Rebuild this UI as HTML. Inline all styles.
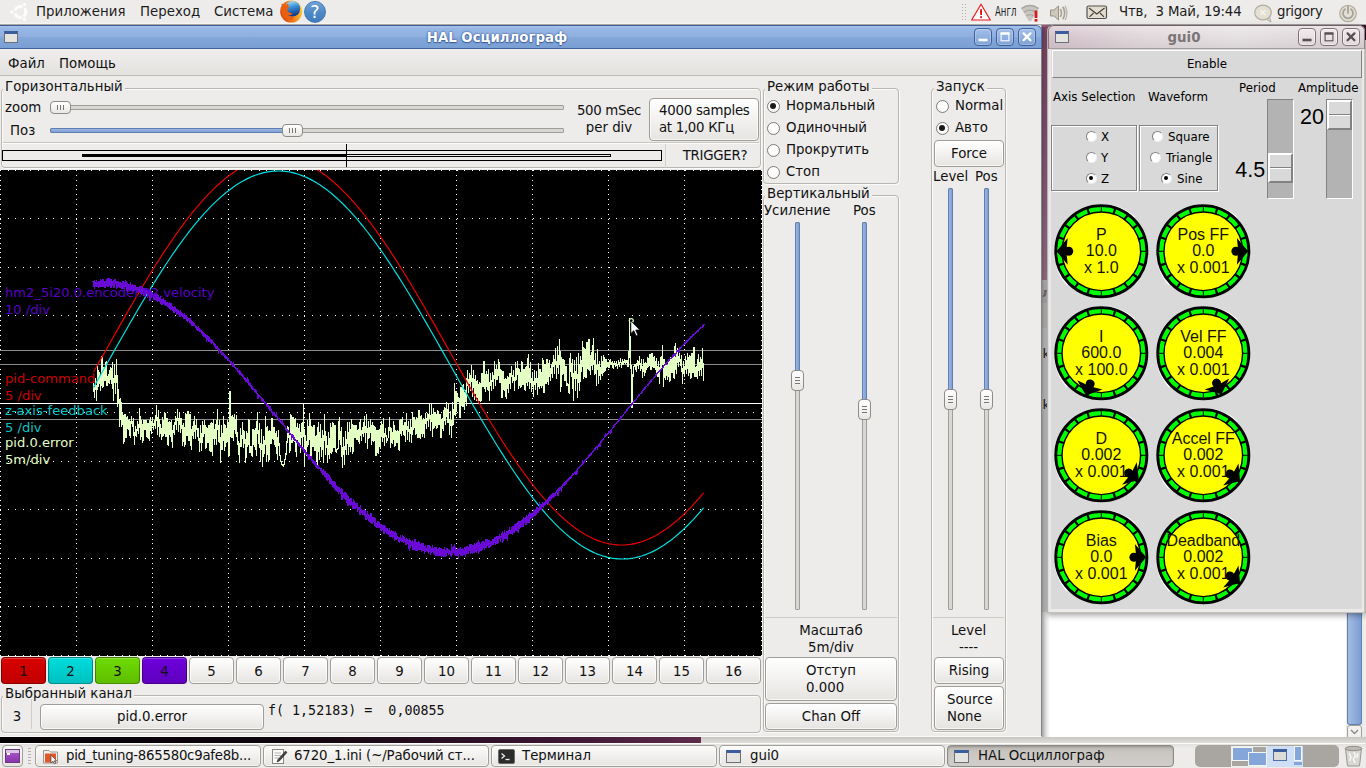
<!DOCTYPE html>
<html lang="ru"><head><meta charset="utf-8"><title>HAL Осциллограф</title>
<style>
*{box-sizing:border-box;margin:0;padding:0}
html,body{width:1366px;height:768px;overflow:hidden}
body{position:relative;background:#2c0d22;font-family:"DejaVu Sans","Liberation Sans",sans-serif;font-size:13.33px;color:#111;line-height:16px}
.a{position:absolute;white-space:nowrap}
.c{text-align:center}
.btn{position:absolute;border:1px solid #a09d98;border-radius:4px;background:linear-gradient(#ffffff,#f4f3f2 45%,#e6e4e1);box-shadow:inset 0 0 0 1px rgba(255,255,255,.7);text-align:center;white-space:nowrap}
.fr{position:absolute;border:1px solid #b9b6b1;border-radius:4px;box-shadow:inset 1px 1px 0 #fbfbfa,1px 1px 0 #fbfbfa}
.lbl{position:absolute;background:#edeceb;padding:0 2px;white-space:nowrap}
.rad{position:absolute;width:13px;height:13px;border-radius:50%;border:1px solid #7f7c77;background:radial-gradient(circle at 50% 40%,#fff 55%,#e6e4e0)}
.rad.on:after{content:"";position:absolute;left:2.5px;top:2.5px;width:6px;height:6px;border-radius:50%;background:#1a1a1a}
.tro{position:absolute;border:1px solid #a09d98;background:#d9d7d3;border-radius:1px}
.fil{position:absolute;border:1px solid #5f7fb2;background:linear-gradient(90deg,#9bb6e0,#7fa0d3);border-radius:2px}
.filh{position:absolute;border:1px solid #5f7fb2;background:linear-gradient(#9bb6e0,#7fa0d3);border-radius:2px}
.knb{position:absolute;border:1px solid #8e8b86;border-radius:4px;background:linear-gradient(#fff,#e9e7e4)}
.tk{font-family:"DejaVu Sans","Liberation Sans",sans-serif;font-size:12px}
.hv{font-family:"Liberation Sans",sans-serif}
.tb{position:absolute;top:745px;height:22px;border:1px solid #a29f9a;border-radius:4px;background:linear-gradient(#fbfbfa,#e7e5e2);box-shadow:inset 0 0 0 1px rgba(255,255,255,.6)}
.tb span{position:absolute;left:30px;top:1px;font-size:13.33px;line-height:18px;white-space:nowrap}
.wb{position:absolute;top:28px;width:18px;height:18px;border-radius:4px}
</style></head>
<body>
<div class="a" style="left:1036px;top:25px;width:14px;height:260px;background:linear-gradient(#96557a,#a2648a 40%,#b98aa6)"></div>
<div class="a" style="left:1040px;top:280px;width:326px;height:23px;background:linear-gradient(#e3dcdf,#d3cdd0)"></div>
<div class="a" style="left:1040px;top:303px;width:326px;height:25px;background:#dedddb"></div>
<div class="a" style="left:1040px;top:328px;width:326px;height:415px;background:#fff"></div>
<div class="a" style="left:1040px;top:328px;width:9px;height:284px;background:#e9e9e9"></div>
<div class="a" style="left:1042px;top:285px;font-size:12px;font-weight:bold;color:#8a8285">л</div>
<div class="a" style="left:1042.5px;top:346px;font-size:13px;color:#222">k</div>
<div class="a" style="left:1042.5px;top:397px;font-size:13px;color:#222">k</div>
<div class="a" style="left:1346px;top:612px;width:20px;height:131px;background:#edeceb"></div>
<div class="a" style="left:1347px;top:612px;width:15px;height:113px;border:1px solid #5f7fb2;border-top:0;background:linear-gradient(90deg,#a3bce3,#7c9ed2);border-radius:0 0 3px 3px"></div>
<div class="a" style="left:1347px;top:725px;width:15px;height:14px;border:1px solid #a29f9a;border-radius:3px;background:#f2f1f0"></div>
<svg class="a" style="left:1350px;top:728px" width="9" height="8"><path d="M1 2 L4.5 5.5 L8 2" fill="none" stroke="#8a8782" stroke-width="1.3"/></svg>
<div class="a" style="left:0;top:737px;width:701px;height:7px;background:linear-gradient(90deg,#060305,#0e050b 40%,#3a1530 78%,#5e2c4b)"></div>
<div class="a" style="left:701px;top:737px;width:665px;height:7px;background:linear-gradient(#c9c6c2,#e4e2df)"></div>
<div class="a" style="left:0;top:0;width:1366px;height:25px;background:linear-gradient(#edeceb,#edeceb 90%,#f7f6f5);border-bottom:1px solid #aaa7a6"></div>
<svg class="a" style="left:8px;top:0" width="26" height="24" viewBox="0 0 26 24"><g fill="#fcfcfb"><circle cx="12.3" cy="12" r="5.4" fill="none" stroke="#fcfcfb" stroke-width="3" stroke-dasharray="9.1 2.21" transform="rotate(71.7 12.3 12)"/><circle cx="3.7" cy="12" r="1.7"/><circle cx="16.6" cy="4.5" r="1.7"/><circle cx="16.6" cy="19.5" r="1.7"/></g></svg>
<div class="a" style="left:36px;top:2px;font-size:13.33px;line-height:20px;color:#1c1c1c">Приложения</div>
<div class="a" style="left:140px;top:2px;font-size:13.33px;line-height:20px;color:#1c1c1c">Переход</div>
<div class="a" style="left:214px;top:2px;font-size:13.33px;line-height:20px;color:#1c1c1c">Система</div>
<svg class="a" style="left:279px;top:0" width="24" height="24" viewBox="0 0 24 24"><defs><linearGradient id="ffg" x1="0" y1="0" x2="0.25" y2="1"><stop offset="0" stop-color="#bdeefa"/><stop offset=".45" stop-color="#3d94dc"/><stop offset="1" stop-color="#143a8c"/></linearGradient><linearGradient id="ffo" x1="0" y1=".6" x2="1" y2=".25"><stop offset="0" stop-color="#d9440d"/><stop offset=".45" stop-color="#ef7d18"/><stop offset=".8" stop-color="#f9b526"/><stop offset="1" stop-color="#fbd640"/></linearGradient></defs><circle cx="12.2" cy="11.6" r="11" fill="url(#ffo)"/><circle cx="13.5" cy="8.8" r="7.7" fill="url(#ffg)"/><path d="M1.6 8 C2.6 5.4 4.8 3.6 6.2 5.6 C7.4 4.6 8.4 3.8 9.5 3.2 C9 5 9.3 6.4 10.5 7.1 C9.2 8.3 8.2 9.6 8.3 10.8 C9.2 12.5 11.2 13.2 13.6 13.4 C12.4 15 10.4 15.7 8.4 15.2 C9.8 16.9 12.4 17.4 15 16.6 L13 20 L4 17.5 Z" fill="#e8600f"/><path d="M2.5 3.2 L6.3 5.7 L3 8 Z" fill="#e8600f"/></svg>
<svg class="a" style="left:303px;top:0" width="24" height="24" viewBox="0 0 24 24"><defs><linearGradient id="hg" x1="0" y1="0" x2="0" y2="1"><stop offset="0" stop-color="#73a5da"/><stop offset=".5" stop-color="#4f8ac8"/><stop offset="1" stop-color="#3f7bbb"/></linearGradient></defs><circle cx="12" cy="11.9" r="10.5" fill="url(#hg)" stroke="#3a74ae" stroke-width=".9"/><text x="12" y="18.4" text-anchor="middle" font-family="DejaVu Sans,sans-serif" font-size="17.5" fill="#fff">?</text></svg>
<div class="a" style="left:962px;top:4px;width:1px;height:17px;background:repeating-linear-gradient(#b5b2ad 0 1px,transparent 1px 3px)"></div><div class="a" style="left:965px;top:4px;width:1px;height:17px;background:repeating-linear-gradient(#b5b2ad 0 1px,transparent 1px 3px)"></div>
<svg class="a" style="left:970px;top:2px" width="22" height="20" viewBox="0 0 22 20"><path d="M11 2.2 L20.3 18 L1.7 18 Z" fill="#fdfdfd" stroke="#f01818" stroke-width="1.2" stroke-linejoin="round"/><rect x="10.1" y="7.2" width="1.9" height="5.8" fill="#e81818"/><rect x="10.1" y="14.2" width="1.9" height="1.9" fill="#e81818"/></svg>
<div class="a" style="left:995px;top:2px;font-size:13.6px;line-height:18px;color:#222;transform:scaleX(.63);transform-origin:0 0">Англ</div>
<svg class="a" style="left:1020px;top:3px" width="22" height="20" viewBox="0 0 22 20"><path d="M1 5 Q10 -1.5 19 5 L11.5 17.5 Q10 18.6 8.5 17.5 Z" fill="#c9c6c2"/><g fill="none" stroke="#a9a6a1" stroke-width="1.3"><path d="M1.5 5.5 Q10 -0.5 18.5 5.5"/><path d="M4 9.3 Q10 4.8 16 9.3"/><path d="M6.5 13 Q10 10.3 13.5 13"/></g><rect x="14.6" y="7.5" width="2.8" height="7.5" fill="#d41c1c"/><rect x="14.6" y="16" width="2.8" height="2.6" fill="#d41c1c"/></svg>
<svg class="a" style="left:1048px;top:3px" width="24" height="20" viewBox="0 0 24 20"><path d="M2.5 7 H6 L10.5 3 V17 L6 13 H2.5 Z" fill="#cdc8ba" stroke="#8f8b7e" stroke-width=".9"/><g fill="none" stroke="#a8a395" stroke-width="1.7"><path d="M12.3 6 Q14.6 10 12.3 14"/><path d="M14.8 3.8 Q18.6 10 14.8 16.2"/></g><path d="M17 2.8 Q21 10 17 17.2" fill="none" stroke="#bdb8ab" stroke-width="1.4"/></svg>
<svg class="a" style="left:1086px;top:5px" width="22" height="15" viewBox="0 0 22 15"><rect x="1" y="1" width="19.5" height="12.5" rx="1.5" fill="#e2ddcf" stroke="#55524c" stroke-width="1.2"/><path d="M3 3 L10.8 9 L18.6 3 M3.5 11.8 L7.6 8 M18 11.8 L14 8" fill="none" stroke="#3f3d39" stroke-width="1.1"/></svg>
<div class="a" style="left:1119px;top:2px;font-size:13.33px;line-height:20px;color:#1c1c1c;white-space:pre;letter-spacing:-.16px">Чтв,  3 Май, 19:44</div>
<svg class="a" style="left:1253px;top:3px" width="20" height="20" viewBox="0 0 20 20"><path d="M12.5 15.8 L18 19 L16.3 13.5 Z" fill="#dedacb" stroke="#b3ae9f" stroke-width="1"/><ellipse cx="10" cy="9.5" rx="8.3" ry="7.4" fill="#e3dfd2" stroke="#b3ae9f" stroke-width="1.2"/><path d="M7.5 7 L12.5 12 M12.5 7 L7.5 12" stroke="#f4f3f1" stroke-width="1.6"/></svg>
<div class="a" style="left:1277px;top:2px;font-size:13.33px;line-height:20px;color:#1c1c1c;letter-spacing:-.3px">grigory</div>
<svg class="a" style="left:1338px;top:3px" width="20" height="20" viewBox="0 0 20 20"><circle cx="10" cy="10.5" r="8.2" fill="#e3dfd2" stroke="#b3ae9f" stroke-width="1.3"/><path d="M7 6.3 A5 5 0 1 0 13 6.3" fill="none" stroke="#a5a29d" stroke-width="1.8" stroke-linecap="round"/><path d="M10 3.5 V10" stroke="#a5a29d" stroke-width="1.8" stroke-linecap="round"/></svg>
<div class="a" style="left:0;top:25px;width:1042px;height:712px;background:#edeceb;border-right:1px solid #86868a;border-bottom:1px solid #f8f8f7"></div>
<div class="a" style="left:0;top:25px;width:1042px;height:24px;border-radius:0 6px 0 0;background:linear-gradient(#a7c3ec,#98b7e4 12%,#8fafe0 48%,#84a7da 52%,#7a9fd4);border-top:1px solid #3f5f93;border-right:1px solid #4f72aa;border-bottom:1px solid #3f639e"></div>
<div class="a" style="left:4px;top:31px;width:14px;height:12px;border:1px solid #6b6f7a;background:#e4e3e0;border-top:3px solid #3c5d9c"></div>
<div class="a c" style="left:397px;top:29px;width:200px;font-weight:bold;font-size:13.33px;line-height:18px;color:#fff;text-shadow:0 1px 1px #3c5f9e,0 0 1.5px #3c5f9e,0 0 2px #45689f">HAL Осциллограф</div>
<div class="wb" style="left:974px;border:1px solid #3f6099;background:linear-gradient(#a3bfe8,#7fa2d6);box-shadow:inset 0 0 0 1px rgba(255,255,255,.25)"></div>
<svg class="a" style="left:974px;top:28px" width="18" height="18" viewBox="0 0 18 18"><rect x="4.5" y="10.7" width="9" height="2.6" fill="#fff"/></svg>
<div class="wb" style="left:996px;border:1px solid #3f6099;background:linear-gradient(#a3bfe8,#7fa2d6);box-shadow:inset 0 0 0 1px rgba(255,255,255,.25)"></div>
<svg class="a" style="left:996px;top:28px" width="18" height="18" viewBox="0 0 18 18"><rect x="5.1" y="5" width="7.8" height="7.8" fill="none" stroke="#fff" stroke-width="1.1"/><rect x="4.6" y="4.5" width="8.8" height="2.2" fill="#fff"/></svg>
<div class="wb" style="left:1018px;border:1px solid #3f6099;background:linear-gradient(#a3bfe8,#7fa2d6);box-shadow:inset 0 0 0 1px rgba(255,255,255,.25)"></div>
<svg class="a" style="left:1018px;top:28px" width="18" height="18" viewBox="0 0 18 18"><path d="M5.6 5.4 L12.4 12.2 M12.4 5.4 L5.6 12.2" stroke="#fff" stroke-width="2.3" stroke-linecap="round"/></svg>
<div class="a" style="left:0;top:49px;width:1041px;height:27px;background:linear-gradient(#f0efee,#edeceb 20%,#e4e2df);border-bottom:1px solid #bfbcb7"></div>
<div class="a" style="left:8px;top:54px;font-size:13.33px;line-height:20px">Файл</div>
<div class="a" style="left:59px;top:54px;font-size:13.33px;line-height:20px">Помощь</div>
<div class="fr" style="left:1px;top:88px;width:760px;height:80px"></div>
<div class="lbl" style="left:3px;top:78px;font-size:13.33px;line-height:18px">Горизонтальный</div>
<div class="a" style="left:5px;top:99px;font-size:13.33px;line-height:18px;">zoom</div>
<div class="a" style="left:10px;top:122px;font-size:13.33px;line-height:18px;">Поз</div>
<div class="tro" style="left:50px;top:105px;width:514px;height:5px"></div>
<div class="knb" style="left:50px;top:101px;width:21px;height:13px"></div>
<div class="tro" style="left:50px;top:128px;width:514px;height:5px"></div>
<div class="filh" style="left:50px;top:128px;width:236px;height:5px"></div>
<div class="knb" style="left:282px;top:124px;width:21px;height:13px"></div>
<div class="a" style="left:57px;top:105px;width:7px;height:5px;background:repeating-linear-gradient(90deg,#777 0 1px,transparent 1px 3px)"></div>
<div class="a" style="left:289px;top:128px;width:7px;height:5px;background:repeating-linear-gradient(90deg,#777 0 1px,transparent 1px 3px)"></div>
<div class="a c" style="left:572px;top:102px;width:74px;font-size:13.33px;line-height:18px;letter-spacing:-.3px">500 mSec</div>
<div class="a c" style="left:572px;top:119px;width:74px;font-size:13.33px;line-height:18px;">per div</div>
<div class="btn" style="left:649px;top:98px;width:110px;height:43px;"><span style="font-size:13.33px;line-height:18px;display:block;"></span></div>
<div class="a" style="left:659px;top:102px;font-size:13.33px;line-height:18px;letter-spacing:-.25px">4000 samples</div>
<div class="a" style="left:659px;top:119px;font-size:13.33px;line-height:18px;letter-spacing:-.3px">at 1,00 КГц</div>
<div class="a" style="left:3px;top:142px;width:756px;height:2px;background:#c9c6c2;border-bottom:1px solid #fbfbfa"></div>
<div class="a" style="left:2px;top:150px;width:660px;height:11px;border:1px solid #000;background:#edeceb"></div>
<div class="a" style="left:82px;top:154px;width:264px;height:3px;background:#000"></div>
<div class="a" style="left:346px;top:154px;width:265px;height:3px;border:1px solid #000;border-left:0"></div>
<div class="a" style="left:346px;top:144px;width:1px;height:23px;background:#000"></div>
<div class="a" style="left:665px;top:144px;width:1px;height:24px;background:#d4d1cd"></div>
<div class="a c" style="left:671px;top:147px;width:88px;font-size:13.33px;line-height:18px;letter-spacing:-.25px">TRIGGER?</div>
<svg class="a" style="left:0px;top:170px" width="762" height="486" viewBox="0 170 762 486" shape-rendering="crispEdges"><rect x="0" y="170" width="762" height="486" fill="#000"/><path d="M0.5 170V656M76.5 170V656M152.5 170V656M228.5 170V656M304.5 170V656M380.5 170V656M456.5 170V656M532.5 170V656M608.5 170V656M684.5 170V656M761.5 170V656" stroke="#fff" stroke-width="1" stroke-dasharray="1 3.85" fill="none"/><path d="M0 170.5H762M0 218.5H762M0 267.5H762M0 315.5H762M0 364.5H762M0 412.5H762M0 461.5H762M0 509.5H762M0 558.5H762M0 606.5H762M0 655.5H762" stroke="#fff" stroke-width="1" stroke-dasharray="1 6.61" fill="none"/><rect x="0" y="350" width="762" height="1" fill="#8c8c8c"/><rect x="0" y="364" width="762" height="1" fill="#8c8c8c"/><rect x="0" y="403" width="762" height="1" fill="#ffffff"/><rect x="0" y="419" width="762" height="1" fill="#8c8c8c"/><polyline points="93.5,383.1 94.5,397.7 95.6,378.1 96.6,400.4 97.7,365.3 98.7,386.6 99.8,372.7 100.8,390.6 101.9,356.1 102.9,387.6 104.0,366.8 105.0,380.4 106.1,361.8 107.1,385.7 108.2,374.4 109.2,384.0 110.3,367.3 111.3,383.1 112.4,362.1 113.4,400.8 114.5,364.3 115.5,393.2 116.6,359.2 117.6,406.9 118.7,390.0 119.7,426.1 120.8,398.4 121.8,426.4 122.9,413.7 123.9,443.2 125.0,414.5 126.0,437.4 127.1,416.6 128.1,429.4 129.2,419.3 130.2,438.0 131.3,416.9 132.3,426.2 133.4,418.4 134.4,444.4 135.5,426.5 136.6,436.4 137.6,421.3 138.7,433.6 139.7,408.9 140.8,439.2 141.8,420.7 142.9,442.4 143.9,420.1 145.0,430.2 146.0,420.3 147.1,437.1 148.1,423.1 149.2,440.4 150.2,417.5 151.3,433.8 152.3,417.9 153.4,429.6 154.4,420.3 155.5,428.9 156.5,405.8 157.6,434.5 158.6,411.0 159.7,436.9 160.7,424.5 161.8,439.9 162.8,417.5 163.9,435.2 164.9,412.6 166.0,436.4 167.0,417.8 168.1,445.2 169.1,421.5 170.2,436.3 171.2,420.6 172.3,447.5 173.3,425.5 174.4,434.6 175.4,416.5 176.5,429.3 177.5,409.8 178.6,431.6 179.6,412.5 180.7,432.0 181.7,419.0 182.8,445.8 183.8,423.7 184.9,446.2 185.9,413.6 187.0,435.9 188.0,411.2 189.1,441.0 190.1,414.0 191.2,449.5 192.2,426.0 193.3,438.6 194.3,416.5 195.4,438.8 196.4,419.2 197.5,436.8 198.5,428.9 199.6,451.3 200.6,425.8 201.7,450.0 202.7,421.2 203.8,436.6 204.8,420.8 205.9,448.5 206.9,427.9 208.0,443.2 209.0,425.6 210.1,451.2 211.1,422.5 212.2,455.3 213.2,419.2 214.3,444.1 215.3,424.4 216.4,444.3 217.4,409.2 218.5,441.5 219.5,420.3 220.6,462.3 221.6,425.7 222.7,449.6 223.7,416.3 224.8,450.4 225.8,425.9 226.9,442.9 227.9,420.2 229.0,455.5 230.0,390.8 231.1,437.7 232.1,415.3 233.2,440.5 234.2,414.1 235.3,434.0 236.3,415.2 237.4,444.6 238.4,441.2 239.5,462.7 240.5,428.9 241.6,446.8 242.6,422.6 243.7,447.8 244.7,432.0 245.8,462.5 246.8,431.5 247.9,446.1 248.9,419.2 250.0,452.9 251.0,445.8 252.1,456.2 253.1,429.0 254.2,446.5 255.2,428.1 256.3,455.5 257.3,412.4 258.4,443.1 259.4,424.0 260.5,461.9 261.5,430.0 262.6,466.3 263.6,436.6 264.7,453.3 265.7,417.0 266.8,460.2 267.8,426.6 268.9,461.2 269.9,430.5 271.0,443.6 272.0,418.3 273.1,439.3 274.1,427.3 275.2,447.0 276.2,431.3 277.3,459.7 278.3,430.1 279.4,451.6 280.4,457.8 281.5,463.7 282.5,465.5 283.6,466.6 284.6,460.9 285.7,456.4 286.7,448.4 287.8,426.0 288.8,431.9 289.9,453.0 290.9,414.4 292.0,442.4 293.0,417.4 294.1,441.6 295.1,418.6 296.2,456.1 297.2,423.5 298.3,444.0 299.3,424.4 300.4,452.6 301.4,423.5 302.5,446.7 303.5,404.2 304.6,465.2 305.6,435.4 306.7,455.0 307.7,421.0 308.8,444.9 309.8,413.4 310.9,457.3 311.9,426.5 313.0,446.6 314.0,425.6 315.1,451.0 316.1,435.7 317.2,465.0 318.2,422.4 319.3,459.3 320.3,424.6 321.4,456.0 322.4,430.3 323.5,462.0 324.5,415.0 325.6,454.2 326.6,436.9 327.7,462.4 328.7,432.6 329.8,458.7 330.8,423.3 331.9,453.2 332.9,422.7 334.0,448.0 335.0,425.0 336.1,452.7 337.1,448.9 338.2,448.9 339.2,417.5 340.3,445.0 341.3,427.2 342.4,467.8 343.4,437.3 344.5,464.9 345.5,431.6 346.6,454.3 347.6,422.6 348.7,454.7 349.7,422.9 350.8,452.0 351.8,419.8 352.9,453.5 353.9,425.2 355.0,437.5 356.0,425.4 357.1,439.6 358.1,429.9 359.2,443.8 360.2,419.4 361.3,440.3 362.3,427.3 363.4,436.0 364.4,416.3 365.5,442.7 366.5,415.0 367.6,448.1 368.6,421.9 369.7,437.5 370.7,419.9 371.8,444.7 372.8,422.7 373.9,441.1 374.9,426.7 376.0,455.6 377.0,430.1 378.1,453.5 379.1,429.3 380.2,448.9 381.2,421.1 382.3,441.4 383.3,419.0 384.4,445.8 385.4,428.1 386.5,442.1 387.5,439.3 388.6,436.8 389.6,417.8 390.7,447.7 391.7,428.7 392.8,443.5 393.8,421.3 394.9,446.9 395.9,430.5 397.0,442.8 398.0,430.7 399.1,450.5 400.1,419.7 401.2,435.7 402.2,417.2 403.3,434.2 404.3,422.4 405.4,441.5 406.4,413.6 407.5,439.8 408.5,421.7 409.6,441.2 410.6,420.0 411.7,442.2 412.7,412.9 413.8,429.3 414.8,417.5 415.9,434.7 416.9,417.0 418.0,437.8 419.0,410.6 420.1,438.1 421.1,415.4 422.2,436.5 423.2,418.3 424.3,437.5 425.3,413.8 426.4,428.2 427.4,413.3 428.5,426.2 429.5,404.6 430.6,430.7 431.6,404.6 432.7,436.3 433.7,408.4 434.8,427.8 435.8,412.3 436.9,428.6 437.9,410.6 439.0,425.0 440.0,414.6 441.1,437.8 442.1,418.3 443.2,430.4 444.2,407.1 445.3,424.6 446.3,402.9 447.4,422.5 448.4,403.3 449.5,434.7 450.5,411.9 451.6,437.6 452.6,402.3 453.7,424.8 454.7,383.7 455.8,415.8 456.8,391.6 457.9,401.6 458.9,397.1 460.0,417.4 461.0,387.2 462.1,406.4 463.1,384.9 464.2,409.8 465.2,390.1 466.3,405.3 467.3,370.8 468.4,392.3 469.4,373.8 470.5,390.1 471.5,365.5 472.6,396.4 473.6,370.2 474.7,399.5 475.7,375.6 476.8,400.9 477.8,380.9 478.9,402.2 479.9,382.0 481.0,401.3 482.0,373.0 483.1,386.6 484.1,361.1 485.2,391.7 486.2,371.7 487.3,390.0 488.3,369.5 489.4,400.1 490.4,373.6 491.5,390.1 492.5,372.7 493.6,388.6 494.6,361.4 495.7,385.1 496.7,365.8 497.8,379.5 498.8,359.4 499.9,383.0 500.9,369.3 502.0,397.4 503.0,370.9 504.1,390.6 505.1,378.8 506.2,399.0 507.2,376.6 508.3,392.2 509.3,373.3 510.4,388.0 511.4,366.9 512.5,382.3 513.5,370.4 514.6,390.7 515.6,362.1 516.7,379.8 517.7,361.8 518.8,388.8 519.8,369.4 520.9,387.8 521.9,361.6 523.0,384.5 524.0,368.8 525.1,390.5 526.1,366.9 527.2,385.2 528.2,354.5 529.3,388.3 530.3,362.8 531.4,391.0 532.4,372.2 533.5,396.1 534.5,370.5 535.6,389.8 536.6,371.1 537.7,394.4 538.7,363.9 539.8,388.8 540.8,369.8 541.9,387.1 542.9,358.8 544.0,392.9 545.0,364.4 546.1,383.8 547.1,359.0 548.2,384.8 549.2,360.2 550.3,380.9 551.3,364.3 552.4,377.3 553.4,355.8 554.5,373.2 555.5,349.0 556.6,378.9 557.6,346.6 558.7,373.7 559.7,339.3 560.8,391.7 561.8,357.3 562.9,374.2 563.9,359.3 565.0,381.1 566.0,366.0 567.1,385.7 568.1,384.8 569.2,393.9 570.2,353.6 571.3,376.7 572.3,359.8 573.4,400.4 574.4,360.9 575.5,390.0 576.5,357.6 577.6,397.7 578.6,353.4 579.7,390.0 580.7,356.9 581.8,371.6 582.8,341.7 583.9,378.8 584.9,348.4 586.0,378.2 587.0,342.4 588.1,369.1 589.1,339.0 590.2,374.1 591.2,352.8 592.3,369.3 593.3,338.8 594.4,374.7 595.4,353.9 596.5,385.8 597.5,349.6 598.6,383.8 599.6,361.6 600.7,379.9 601.7,357.0 602.8,375.6 603.8,355.3 604.9,371.2 605.9,359.2 606.9,367.1 608.0,362.0 609.0,367.9 610.1,359.7 611.1,365.0 612.2,361.7 613.2,368.4 614.3,361.3 615.3,366.3 616.4,361.7 617.4,368.4 618.5,360.8 619.5,366.7 620.6,358.6 621.6,367.5 622.7,359.7 623.7,364.4 624.8,359.7 625.8,363.3 626.9,360.2 627.9,366.4 628.8,366.0 629.7,319.0 630.4,368.0 631.4,366.0 632.0,408.0 632.6,384.0 633.2,372.0 634.2,365.7 635.3,364.4 636.3,371.8 637.4,360.3 638.4,368.4 639.5,356.9 640.5,370.1 641.6,359.3 642.6,377.9 643.7,359.7 644.7,375.7 645.8,362.4 646.8,369.9 647.9,357.9 648.9,366.7 650.0,354.2 651.0,369.6 652.1,353.1 653.1,367.1 654.2,356.3 655.2,369.2 656.3,359.0 657.3,376.2 658.4,362.0 659.4,383.1 660.5,357.4 661.5,367.9 662.6,345.2 663.6,386.4 664.7,359.3 665.7,379.7 666.8,362.6 667.8,379.3 668.9,360.7 669.9,382.0 671.0,357.3 672.0,372.7 673.1,355.4 674.1,378.2 675.2,343.0 676.2,373.3 677.3,348.1 678.3,366.9 679.4,351.5 680.4,365.9 681.5,355.1 682.5,383.3 683.6,361.5 684.6,376.2 685.7,356.1 686.7,373.7 687.8,353.2 688.8,375.8 689.9,355.0 690.9,378.6 692.0,353.5 693.0,372.8 694.1,347.0 695.1,377.0 696.2,366.2 697.2,378.8 698.3,354.6 699.3,375.3 700.4,357.5 701.4,375.4 702.5,349.0 703.5,381.3" fill="none" stroke="#e4ffc4" stroke-width="1.15" stroke-linejoin="round"/><circle cx="631.3" cy="320.6" r="2" fill="none" stroke="#e4ffc4" stroke-width="1.2" shape-rendering="auto"/><polyline points="93.5,372.0 95.5,368.5 97.5,365.0 99.5,361.4 101.5,357.9 103.5,354.4 105.5,350.8 107.5,347.3 109.5,343.7 111.5,340.2 113.5,336.7 115.5,333.1 117.5,329.6 119.5,326.1 121.5,322.6 123.5,319.1 125.5,315.6 127.5,312.1 129.5,308.6 131.5,305.2 133.5,301.8 135.5,298.3 137.5,294.9 139.5,291.6 141.5,288.2 143.5,284.9 145.5,281.5 147.5,278.2 149.5,275.0 151.5,271.7 153.5,268.5 155.5,265.3 157.5,262.1 159.5,259.0 161.5,255.9 163.5,252.8 165.5,249.8 167.5,246.8 169.5,243.8 171.5,240.9 173.5,238.0 175.5,235.1 177.5,232.3 179.5,229.5 181.5,226.8 183.5,224.1 185.5,221.4 187.5,218.8 189.5,216.2 191.5,213.7 193.5,211.2 195.5,208.8 197.5,206.4 199.5,204.1 201.5,201.8 203.5,199.5 205.5,197.3 207.5,195.2 209.5,193.1 211.5,191.1 213.5,189.1 215.5,187.2 217.5,185.3 219.5,183.5 221.5,181.7 223.5,180.0 225.5,178.4 227.5,176.8 229.5,175.3 231.5,173.8 233.5,172.4 235.5,171.0 237.5,169.7 239.5,168.5 241.5,167.3 243.5,166.2 245.5,165.2 247.5,164.2 249.5,163.3 251.5,162.4 253.5,161.6 255.5,160.9 257.5,160.2 259.5,159.6 261.5,159.0 263.5,158.6 265.5,158.1 267.5,157.8 269.5,157.5 271.5,157.3 273.5,157.1 275.5,157.0 277.5,157.0 279.5,157.0 281.5,157.1 283.5,157.3 285.5,157.5 287.5,157.8 289.5,158.2 291.5,158.6 293.5,159.1 295.5,159.6 297.5,160.3 299.5,160.9 301.5,161.7 303.5,162.5 305.5,163.4 307.5,164.3 309.5,165.3 311.5,166.3 313.5,167.4 315.5,168.6 317.5,169.9 319.5,171.2 321.5,172.5 323.5,173.9 325.5,175.4 327.5,177.0 329.5,178.5 331.5,180.2 333.5,181.9 335.5,183.7 337.5,185.5 339.5,187.4 341.5,189.3 343.5,191.3 345.5,193.3 347.5,195.4 349.5,197.6 351.5,199.8 353.5,202.0 355.5,204.3 357.5,206.6 359.5,209.0 361.5,211.5 363.5,213.9 365.5,216.5 367.5,219.1 369.5,221.7 371.5,224.3 373.5,227.0 375.5,229.8 377.5,232.6 379.5,235.4 381.5,238.3 383.5,241.2 385.5,244.1 387.5,247.1 389.5,250.1 391.5,253.1 393.5,256.2 395.5,259.3 397.5,262.5 399.5,265.6 401.5,268.8 403.5,272.0 405.5,275.3 407.5,278.6 409.5,281.9 411.5,285.2 413.5,288.5 415.5,291.9 417.5,295.3 419.5,298.7 421.5,302.1 423.5,305.5 425.5,309.0 427.5,312.5 429.5,315.9 431.5,319.4 433.5,322.9 435.5,326.4 437.5,330.0 439.5,333.5 441.5,337.0 443.5,340.6 445.5,344.1 447.5,347.6 449.5,351.2 451.5,354.7 453.5,358.3 455.5,361.8 457.5,365.3 459.5,368.9 461.5,372.4 463.5,375.9 465.5,379.4 467.5,382.9 469.5,386.4 471.5,389.9 473.5,393.4 475.5,396.8 477.5,400.2 479.5,403.7 481.5,407.1 483.5,410.4 485.5,413.8 487.5,417.1 489.5,420.5 491.5,423.8 493.5,427.0 495.5,430.3 497.5,433.5 499.5,436.7 501.5,439.9 503.5,443.0 505.5,446.1 507.5,449.2 509.5,452.2 511.5,455.2 513.5,458.2 515.5,461.1 517.5,464.0 519.5,466.9 521.5,469.7 523.5,472.5 525.5,475.2 527.5,477.9 529.5,480.6 531.5,483.2 533.5,485.8 535.5,488.3 537.5,490.8 539.5,493.2 541.5,495.6 543.5,497.9 545.5,500.2 547.5,502.5 549.5,504.7 551.5,506.8 553.5,508.9 555.5,510.9 557.5,512.9 559.5,514.8 561.5,516.7 563.5,518.5 565.5,520.3 567.5,522.0 569.5,523.6 571.5,525.2 573.5,526.7 575.5,528.2 577.5,529.6 579.5,531.0 581.5,532.3 583.5,533.5 585.5,534.7 587.5,535.8 589.5,536.8 591.5,537.8 593.5,538.7 595.5,539.6 597.5,540.4 599.5,541.1 601.5,541.8 603.5,542.4 605.5,543.0 607.5,543.4 609.5,543.9 611.5,544.2 613.5,544.5 615.5,544.7 617.5,544.9 619.5,545.0 621.5,545.0 623.5,545.0 625.5,544.9 627.5,544.7 629.5,544.5 631.5,544.2 633.5,543.8 635.5,543.4 637.5,542.9 639.5,542.4 641.5,541.7 643.5,541.1 645.5,540.3 647.5,539.5 649.5,538.6 651.5,537.7 653.5,536.7 655.5,535.7 657.5,534.6 659.5,533.4 661.5,532.1 663.5,530.8 665.5,529.5 667.5,528.1 669.5,526.6 671.5,525.0 673.5,523.5 675.5,521.8 677.5,520.1 679.5,518.3 681.5,516.5 683.5,514.6 685.5,512.7 687.5,510.7 689.5,508.7 691.5,506.6 693.5,504.4 695.5,502.2 697.5,500.0 699.5,497.7 701.5,495.4 703.5,493.0 703.6,492.9" fill="none" stroke="#e80000" stroke-width="1.2" shape-rendering="auto"/><polyline points="93.5,387.5 95.5,383.9 97.5,380.4 99.5,376.9 101.5,373.3 103.5,369.8 105.5,366.2 107.5,362.7 109.5,359.2 111.5,355.6 113.5,352.1 115.5,348.5 117.5,345.0 119.5,341.5 121.5,338.0 123.5,334.5 125.5,331.0 127.5,327.5 129.5,324.0 131.5,320.6 133.5,317.1 135.5,313.7 137.5,310.3 139.5,306.9 141.5,303.5 143.5,300.2 145.5,296.9 147.5,293.6 149.5,290.3 151.5,287.0 153.5,283.8 155.5,280.6 157.5,277.4 159.5,274.3 161.5,271.1 163.5,268.1 165.5,265.0 167.5,262.0 169.5,259.0 171.5,256.0 173.5,253.1 175.5,250.3 177.5,247.4 179.5,244.6 181.5,241.9 183.5,239.1 185.5,236.5 187.5,233.8 189.5,231.2 191.5,228.7 193.5,226.2 195.5,223.7 197.5,221.3 199.5,219.0 201.5,216.7 203.5,214.4 205.5,212.2 207.5,210.1 209.5,207.9 211.5,205.9 213.5,203.9 215.5,201.9 217.5,200.1 219.5,198.2 221.5,196.4 223.5,194.7 225.5,193.0 227.5,191.4 229.5,189.9 231.5,188.4 233.5,186.9 235.5,185.6 237.5,184.2 239.5,183.0 241.5,181.8 243.5,180.7 245.5,179.6 247.5,178.6 249.5,177.6 251.5,176.7 253.5,175.9 255.5,175.2 257.5,174.5 259.5,173.8 261.5,173.3 263.5,172.7 265.5,172.3 267.5,171.9 269.5,171.6 271.5,171.4 273.5,171.2 275.5,171.1 277.5,171.0 279.5,171.0 281.5,171.1 283.5,171.2 285.5,171.4 287.5,171.7 289.5,172.0 291.5,172.4 293.5,172.9 295.5,173.4 297.5,174.0 299.5,174.7 301.5,175.4 303.5,176.2 305.5,177.0 307.5,177.9 309.5,178.9 311.5,179.9 313.5,181.0 315.5,182.1 317.5,183.4 319.5,184.6 321.5,186.0 323.5,187.4 325.5,188.8 327.5,190.3 329.5,191.9 331.5,193.5 333.5,195.2 335.5,197.0 337.5,198.8 339.5,200.6 341.5,202.5 343.5,204.5 345.5,206.5 347.5,208.6 349.5,210.7 351.5,212.9 353.5,215.1 355.5,217.4 357.5,219.7 359.5,222.1 361.5,224.5 363.5,226.9 365.5,229.5 367.5,232.0 369.5,234.6 371.5,237.3 373.5,240.0 375.5,242.7 377.5,245.5 379.5,248.3 381.5,251.1 383.5,254.0 385.5,256.9 387.5,259.9 389.5,262.9 391.5,265.9 393.5,269.0 395.5,272.1 397.5,275.2 399.5,278.3 401.5,281.5 403.5,284.7 405.5,288.0 407.5,291.3 409.5,294.5 411.5,297.9 413.5,301.2 415.5,304.5 417.5,307.9 419.5,311.3 421.5,314.7 423.5,318.2 425.5,321.6 427.5,325.1 429.5,328.5 431.5,332.0 433.5,335.5 435.5,339.0 437.5,342.5 439.5,346.1 441.5,349.6 443.5,353.1 445.5,356.7 447.5,360.2 449.5,363.8 451.5,367.3 453.5,370.8 455.5,374.4 457.5,377.9 459.5,381.5 461.5,385.0 463.5,388.5 465.5,392.0 467.5,395.5 469.5,399.0 471.5,402.5 473.5,406.0 475.5,409.4 477.5,412.9 479.5,416.3 481.5,419.7 483.5,423.1 485.5,426.5 487.5,429.8 489.5,433.1 491.5,436.4 493.5,439.7 495.5,443.0 497.5,446.2 499.5,449.4 501.5,452.6 503.5,455.7 505.5,458.9 507.5,461.9 509.5,465.0 511.5,468.0 513.5,471.0 515.5,474.0 517.5,476.9 519.5,479.7 521.5,482.6 523.5,485.4 525.5,488.1 527.5,490.9 529.5,493.5 531.5,496.2 533.5,498.8 535.5,501.3 537.5,503.8 539.5,506.3 541.5,508.7 543.5,511.0 545.5,513.3 547.5,515.6 549.5,517.8 551.5,519.9 553.5,522.1 555.5,524.1 557.5,526.1 559.5,528.1 561.5,529.9 563.5,531.8 565.5,533.6 567.5,535.3 569.5,537.0 571.5,538.6 573.5,540.1 575.5,541.6 577.5,543.1 579.5,544.4 581.5,545.8 583.5,547.0 585.5,548.2 587.5,549.3 589.5,550.4 591.5,551.4 593.5,552.4 595.5,553.3 597.5,554.1 599.5,554.8 601.5,555.5 603.5,556.2 605.5,556.7 607.5,557.3 609.5,557.7 611.5,558.1 613.5,558.4 615.5,558.6 617.5,558.8 619.5,558.9 621.5,559.0 623.5,559.0 625.5,558.9 627.5,558.8 629.5,558.6 631.5,558.3 633.5,558.0 635.5,557.6 637.5,557.1 639.5,556.6 641.5,556.0 643.5,555.3 645.5,554.6 647.5,553.8 649.5,553.0 651.5,552.1 653.5,551.1 655.5,550.1 657.5,549.0 659.5,547.9 661.5,546.6 663.5,545.4 665.5,544.0 667.5,542.6 669.5,541.2 671.5,539.7 673.5,538.1 675.5,536.5 677.5,534.8 679.5,533.0 681.5,531.2 683.5,529.4 685.5,527.5 687.5,525.5 689.5,523.5 691.5,521.4 693.5,519.3 695.5,517.1 697.5,514.9 699.5,512.6 701.5,510.3 703.5,507.9 703.6,507.8" fill="none" stroke="#00e0e0" stroke-width="1.2" shape-rendering="auto"/><polyline points="93.0,281.2 93.6,286.3 94.2,280.2 94.8,288.0 95.4,282.1 96.0,286.5 96.6,280.6 97.2,286.7 97.8,283.0 98.4,287.6 99.0,281.4 99.6,286.0 100.2,280.0 100.8,286.8 101.4,280.7 102.0,286.6 102.6,279.3 103.2,286.1 103.8,279.5 104.4,287.2 105.0,282.4 105.6,287.1 106.2,279.7 106.8,285.2 107.4,278.7 108.0,286.3 108.6,278.8 109.2,285.9 109.8,278.8 110.4,287.4 111.0,279.3 111.6,287.0 112.2,281.3 112.8,285.6 113.4,280.1 114.0,287.3 114.6,279.5 115.2,283.9 115.8,279.7 116.4,288.1 117.0,281.3 117.6,287.7 118.2,281.2 118.8,286.3 119.4,282.7 120.0,288.0 120.6,282.3 121.2,288.6 121.8,283.2 122.4,288.5 123.0,281.0 123.6,288.0 124.2,282.2 124.8,289.0 125.4,281.0 126.0,286.3 126.6,282.0 127.2,291.9 127.8,283.4 128.4,289.1 129.0,285.4 129.6,289.4 130.2,282.6 130.8,289.6 131.4,285.2 132.0,290.9 132.6,284.1 133.2,291.2 133.8,285.7 134.4,290.7 135.0,285.6 135.6,289.2 136.2,287.9 136.8,291.9 137.4,287.1 138.0,292.2 138.6,287.5 139.2,291.6 139.8,287.0 140.4,293.2 141.0,286.2 141.6,294.8 142.2,287.2 142.8,293.4 143.4,288.3 144.0,295.6 144.6,288.3 145.2,295.5 145.8,290.0 146.4,293.5 147.0,289.8 147.6,297.0 148.2,291.5 148.8,295.1 149.4,289.7 150.0,300.3 150.6,290.3 151.2,297.7 151.8,291.4 152.4,296.5 153.0,295.5 153.6,299.6 154.2,293.7 154.8,299.4 155.4,294.6 156.0,299.7 156.6,294.0 157.2,301.9 157.8,294.4 158.4,300.0 159.0,298.1 159.6,301.6 160.2,296.3 160.8,303.9 161.4,300.0 162.0,304.7 162.6,299.5 163.2,303.7 163.8,298.7 164.4,304.7 165.0,300.3 165.6,305.4 166.2,303.0 166.8,305.7 167.4,302.6 168.0,307.0 168.6,303.8 169.2,308.3 169.8,302.3 170.4,309.6 171.0,303.6 171.6,309.3 172.2,306.0 172.8,310.0 173.4,307.2 174.0,312.3 174.6,306.6 175.2,312.0 175.8,308.0 176.4,314.0 177.0,309.2 177.6,313.5 178.2,310.7 178.8,314.7 179.4,311.7 180.0,316.3 180.6,311.0 181.2,315.4 181.8,312.2 182.4,316.4 183.0,315.5 183.6,318.4 184.2,313.6 184.8,318.9 185.4,315.2 186.0,318.9 186.6,316.0 187.2,321.6 187.8,317.5 188.4,320.6 189.0,318.5 189.6,322.8 190.2,318.8 190.8,323.8 191.4,320.1 192.0,325.8 192.6,321.7 193.2,325.7 193.8,322.5 194.4,325.7 195.0,325.1 195.6,327.1 196.2,326.1 196.8,329.5 197.4,327.9 198.0,330.9 198.6,326.8 199.2,331.5 199.8,328.7 200.4,331.5 201.0,330.3 201.6,333.9 202.2,331.9 202.8,335.5 203.4,332.7 204.0,336.3 204.6,333.5 205.2,335.7 205.8,334.1 206.4,341.5 207.0,334.9 207.6,339.1 208.2,336.3 208.8,341.2 209.4,337.3 210.0,341.6 210.6,339.7 211.2,343.2 211.8,340.0 212.4,342.8 213.0,342.5 213.6,344.7 214.2,343.6 214.8,346.4 215.4,344.4 216.0,348.5 216.6,346.7 217.2,349.2 217.8,346.7 218.4,353.7 219.0,349.0 219.6,350.3 220.2,350.5 220.8,352.5 221.4,351.7 222.0,354.5 222.6,353.0 223.2,355.8 223.8,353.5 224.4,357.0 225.0,355.2 225.6,358.1 226.2,356.2 226.8,358.7 227.4,357.5 228.0,360.9 228.6,358.9 229.2,360.8 229.8,360.7 230.4,363.5 231.0,361.1 231.6,364.9 232.2,363.2 232.8,366.2 233.4,362.1 234.0,367.1 234.6,365.9 235.2,368.5 235.8,367.2 236.4,369.8 237.0,368.2 237.6,371.1 238.2,370.3 238.8,372.7 239.4,370.8 240.0,374.4 240.6,372.0 241.2,375.5 241.8,373.7 242.4,376.1 243.0,375.3 243.6,378.0 244.2,377.3 244.8,379.3 245.4,378.8 246.0,381.2 246.6,379.8 247.2,382.4 247.8,377.8 248.4,384.1 249.0,382.6 249.6,385.3 250.2,383.9 250.8,386.3 251.4,385.5 252.0,388.2 252.6,387.0 253.2,390.0 253.8,389.0 254.4,391.4 255.0,389.6 255.6,392.6 256.2,390.7 256.8,393.8 257.4,393.3 258.0,398.3 258.6,394.7 259.2,396.7 259.8,395.2 260.4,397.7 261.0,397.0 261.6,400.0 262.2,398.2 262.8,401.4 263.4,400.0 264.0,401.9 264.6,401.7 265.2,403.8 265.8,402.2 266.4,406.1 267.0,404.1 267.6,406.6 268.2,405.8 268.8,408.6 269.4,407.0 270.0,410.2 270.6,406.5 271.2,411.7 271.8,409.6 272.4,415.2 273.0,412.4 273.6,414.7 274.2,412.6 274.8,415.9 275.4,414.9 276.0,416.8 276.6,412.9 277.2,418.1 277.8,417.4 278.4,420.2 279.0,418.7 279.6,421.8 280.2,420.8 280.8,422.4 281.4,421.4 282.0,423.9 282.6,420.2 283.2,425.8 283.8,424.5 284.4,426.9 285.0,426.7 285.6,429.2 286.2,428.7 286.8,430.5 287.4,429.6 288.0,432.6 288.6,430.5 289.2,433.6 289.8,432.3 290.4,434.1 291.0,434.3 291.6,439.3 292.2,434.6 292.8,437.7 293.4,436.1 294.0,439.5 294.6,438.1 295.2,440.9 295.8,439.5 296.4,442.2 297.0,441.8 297.6,443.3 298.2,442.8 298.8,445.5 299.4,443.8 300.0,446.2 300.6,445.6 301.2,448.3 301.8,446.9 302.4,449.1 303.0,447.7 303.6,451.7 304.2,449.4 304.8,452.6 305.4,450.6 306.0,454.5 306.6,452.9 307.2,455.9 307.8,454.6 308.4,459.3 309.0,454.4 309.6,459.0 310.2,456.8 310.8,458.9 311.4,456.9 312.0,460.7 312.6,459.9 313.2,463.5 313.8,460.4 314.4,464.3 315.0,461.1 315.6,466.7 316.2,463.0 316.8,467.7 317.4,465.7 318.0,468.6 318.6,465.6 319.2,468.8 319.8,467.3 320.4,470.7 321.0,468.2 321.6,472.8 322.2,470.3 322.8,474.5 323.4,469.5 324.0,474.9 324.6,471.7 325.2,477.7 325.8,472.0 326.4,479.3 327.0,473.3 327.6,480.2 328.2,474.3 328.8,479.3 329.4,476.0 330.0,483.9 330.6,477.4 331.2,484.5 331.8,479.2 332.4,486.7 333.0,481.1 333.6,487.4 334.2,481.3 334.8,488.7 335.4,482.4 336.0,490.4 336.6,485.5 337.2,491.9 337.8,486.8 338.4,493.1 339.0,487.5 339.6,491.9 340.2,489.7 340.8,493.0 341.4,489.0 342.0,499.6 342.6,489.5 343.2,497.6 343.8,493.1 344.4,498.6 345.0,492.1 345.6,499.2 346.2,493.2 346.8,502.3 347.4,495.3 348.0,505.6 348.6,496.2 349.2,504.4 349.8,499.2 350.4,505.7 351.0,498.7 351.6,504.5 352.2,502.0 352.8,508.1 353.4,499.9 354.0,508.5 354.6,501.3 355.2,508.7 355.8,503.7 356.4,507.8 357.0,503.7 357.6,511.7 358.2,507.3 358.8,509.4 359.4,507.9 360.0,514.7 360.6,506.0 361.2,512.3 361.8,509.2 362.4,514.8 363.0,510.0 363.6,514.6 364.2,509.3 364.8,515.0 365.4,510.5 366.0,520.0 366.6,514.9 367.2,519.0 367.8,511.9 368.4,520.8 369.0,515.7 369.6,521.8 370.2,513.9 370.8,522.2 371.4,514.0 372.0,523.7 372.6,517.4 373.2,522.0 373.8,517.6 374.4,525.9 375.0,517.8 375.6,526.9 376.2,523.2 376.8,527.6 377.4,521.2 378.0,527.9 378.6,521.8 379.2,527.2 379.8,522.5 380.4,530.7 381.0,524.4 381.6,530.7 382.2,525.1 382.8,529.6 383.4,525.3 384.0,533.3 384.6,525.4 385.2,531.3 385.8,526.8 386.4,533.2 387.0,528.1 387.6,533.4 388.2,530.0 388.8,534.1 389.4,528.9 390.0,536.7 390.6,531.3 391.2,537.0 391.8,530.1 392.4,537.8 393.0,531.0 393.6,536.6 394.2,532.3 394.8,540.5 395.4,531.5 396.0,539.6 396.6,533.6 397.2,539.0 397.8,536.4 398.4,541.5 399.0,537.5 399.6,542.4 400.2,535.9 400.8,540.6 401.4,538.4 402.0,541.6 402.6,536.1 403.2,543.0 403.8,536.5 404.4,541.3 405.0,539.3 405.6,544.8 406.2,538.7 406.8,544.7 407.4,540.0 408.0,543.3 408.6,540.9 409.2,550.1 409.8,538.7 410.4,547.9 411.0,543.0 411.6,545.8 412.2,540.0 412.8,549.0 413.4,542.9 414.0,549.3 414.6,539.5 415.2,550.4 415.8,539.8 416.4,550.4 417.0,542.7 417.6,550.0 418.2,542.0 418.8,549.9 419.4,542.4 420.0,549.9 420.6,545.1 421.2,551.3 421.8,543.6 422.4,550.5 423.0,543.6 423.6,550.9 424.2,546.6 424.8,553.2 425.4,545.2 426.0,550.5 426.6,548.3 427.2,551.9 427.8,546.0 428.4,553.5 429.0,545.2 429.6,551.7 430.2,546.6 430.8,554.3 431.4,548.2 432.0,551.9 432.6,545.8 433.2,553.2 433.8,548.6 434.4,554.7 435.0,547.0 435.6,555.5 436.2,547.9 436.8,555.4 437.4,549.7 438.0,555.8 438.6,548.6 439.2,555.6 439.8,548.0 440.4,555.5 441.0,548.2 441.6,556.4 442.2,550.0 442.8,555.3 443.4,549.3 444.0,556.6 444.6,547.9 445.2,556.2 445.8,550.3 446.4,555.3 447.0,548.4 447.6,552.4 448.2,549.0 448.8,554.2 449.4,550.8 450.0,552.9 450.6,551.2 451.2,556.2 451.8,545.0 452.4,554.1 453.0,551.5 453.6,552.4 454.2,544.4 454.8,554.9 455.4,547.6 456.0,556.1 456.6,550.6 457.2,555.7 457.8,548.8 458.4,558.9 459.0,549.0 459.6,553.8 460.2,547.4 460.8,555.8 461.4,549.3 462.0,555.4 462.6,548.4 463.2,554.7 463.8,549.2 464.4,554.1 465.0,547.0 465.6,556.5 466.2,546.6 466.8,553.6 467.4,546.7 468.0,553.3 468.6,547.7 469.2,550.9 469.8,544.8 470.4,553.1 471.0,544.6 471.6,552.8 472.2,545.7 472.8,553.0 473.4,545.1 474.0,553.0 474.6,544.0 475.2,551.4 475.8,544.1 476.4,552.2 477.0,543.1 477.6,550.2 478.2,540.1 478.8,553.8 479.4,542.6 480.0,550.4 480.6,544.5 481.2,550.8 481.8,542.3 482.4,549.4 483.0,541.7 483.6,547.9 484.2,542.2 484.8,549.3 485.4,539.9 486.0,547.5 486.6,540.0 487.2,545.4 487.8,539.5 488.4,547.8 489.0,540.7 489.6,547.5 490.2,541.8 490.8,546.7 491.4,541.3 492.0,544.7 492.6,540.0 493.2,545.0 493.8,539.3 494.4,542.0 495.0,537.1 495.6,544.0 496.2,536.9 496.8,543.1 497.4,536.3 498.0,543.2 498.6,536.6 499.2,538.5 499.8,534.3 500.4,541.3 501.0,536.3 501.6,537.7 502.2,531.8 502.8,542.4 503.4,533.8 504.0,539.0 504.6,530.2 505.2,539.0 505.8,533.3 506.4,538.3 507.0,531.6 507.6,540.1 508.2,530.6 508.8,534.2 509.4,527.9 510.0,533.8 510.6,530.6 511.2,533.1 511.8,527.7 512.4,534.1 513.0,526.8 513.6,532.0 514.2,524.8 514.8,532.6 515.4,524.4 516.0,530.8 516.6,523.3 517.2,531.5 517.8,522.6 518.4,532.5 519.0,521.5 519.6,528.4 520.2,521.6 520.8,527.1 521.4,520.6 522.0,526.3 522.6,519.4 523.2,526.6 523.8,517.4 524.4,522.3 525.0,518.7 525.6,524.7 526.2,515.7 526.8,524.0 527.4,516.8 528.0,522.9 528.6,514.5 529.2,522.3 529.8,513.0 530.4,518.4 531.0,513.4 531.6,517.0 532.2,513.4 532.8,518.6 533.4,509.7 534.0,515.9 534.6,510.3 535.2,515.9 535.8,509.6 536.4,514.2 537.0,507.6 537.6,512.3 538.2,508.7 538.8,512.6 539.4,503.0 540.0,509.3 540.6,504.6 541.2,509.7 541.8,504.9 542.4,506.0 543.0,502.8 543.6,507.3 544.2,502.7 544.8,505.8 545.4,500.9 546.0,503.6 546.6,500.4 547.2,504.6 547.8,499.1 548.4,503.0 549.0,497.8 549.6,500.5 550.2,495.8 550.8,500.2 551.4,494.7 552.0,497.3 552.6,493.6 553.2,497.2 553.8,493.4 554.4,496.4 555.0,493.1 555.6,495.6 556.2,491.0 556.8,492.8 557.4,489.9 558.0,495.6 558.6,489.1 559.2,491.0 559.8,487.8 560.4,489.4 561.0,487.1 561.6,491.4 562.2,485.0 562.8,486.4 563.4,483.4 564.0,485.3 564.6,482.5 565.2,484.6 565.8,481.5 566.4,483.0 567.0,480.6 567.6,481.1 568.2,478.9 568.8,480.0 569.4,477.9 570.0,479.1 570.6,476.7 571.2,477.2 571.8,475.2 572.4,475.6 573.0,473.8 573.6,474.6 574.2,473.0 574.8,473.0 575.4,471.3 576.0,474.9 576.6,470.4 577.2,473.6 577.8,468.9 578.4,468.8 579.0,467.0 579.6,467.6 580.2,466.2 580.8,466.1 581.4,464.9 582.0,465.1 582.6,460.2 583.2,463.7 583.8,462.0 584.4,462.3 585.0,460.2 585.6,460.5 586.2,458.9 586.8,459.3 587.4,457.9 588.0,457.7 588.6,456.1 589.2,456.5 589.8,454.5 590.4,454.9 591.0,453.2 591.6,453.9 592.2,451.8 592.8,452.1 593.4,450.7 594.0,451.0 594.6,448.8 595.2,449.2 595.8,447.6 596.4,447.8 597.0,446.5 597.6,449.5 598.2,444.9 598.8,444.9 599.4,443.3 600.0,446.7 600.6,441.7 601.2,442.4 601.8,440.6 602.4,440.8 603.0,439.2 603.6,439.5 604.2,437.3 604.8,437.7 605.4,433.4 606.0,436.2 606.6,434.7 607.2,434.8 607.8,433.3 608.4,433.2 609.0,431.5 609.6,432.0 610.2,430.5 610.8,433.5 611.4,429.2 612.0,429.0 612.6,427.3 613.2,427.2 613.8,425.7 614.4,426.2 615.0,424.8 615.6,424.8 616.2,423.0 616.8,423.0 617.4,421.6 618.0,421.6 618.6,419.9 619.2,420.1 619.8,418.6 620.4,419.0 621.0,416.8 621.6,417.1 622.2,415.8 622.8,416.0 623.4,414.2 624.0,414.0 624.6,412.4 625.2,412.8 625.8,411.4 626.4,411.1 627.0,409.8 627.6,410.1 628.2,408.0 628.8,408.1 629.4,407.0 630.0,407.1 630.6,405.3 631.2,405.7 631.8,404.0 632.4,404.3 633.0,402.7 633.6,402.3 634.2,401.1 634.8,401.3 635.4,399.1 636.0,399.8 636.6,398.4 637.2,397.8 637.8,396.5 638.4,396.8 639.0,394.8 639.6,395.2 640.2,393.4 640.8,393.9 641.4,392.1 642.0,392.4 642.6,390.5 643.2,390.6 643.8,389.0 644.4,389.2 645.0,387.6 645.6,388.1 646.2,386.2 646.8,386.7 647.4,384.7 648.0,385.3 648.6,383.6 649.2,383.8 649.8,382.0 650.4,382.6 651.0,380.5 651.6,381.0 652.2,379.3 652.8,379.8 653.4,377.7 654.0,378.2 654.6,376.4 655.2,376.6 655.8,374.7 656.4,375.3 657.0,373.7 657.6,373.9 658.2,372.2 658.8,372.1 659.4,370.5 660.0,371.3 660.6,369.4 661.2,369.5 661.8,368.1 662.4,368.3 663.0,366.9 663.6,366.9 664.2,365.1 664.8,365.5 665.4,363.7 666.0,364.4 666.6,362.3 667.2,362.5 667.8,361.5 668.4,361.6 669.0,359.7 669.6,360.5 670.2,358.4 670.8,358.7 671.4,357.4 672.0,357.6 672.6,356.1 673.2,356.2 673.8,354.5 674.4,355.2 675.0,353.2 675.6,356.8 676.2,351.8 676.8,352.1 677.4,350.8 678.0,350.9 678.6,349.5 679.2,352.8 679.8,347.9 680.4,348.4 681.0,346.9 681.6,347.1 682.2,345.4 682.8,345.9 683.4,344.8 684.0,344.8 684.6,342.9 685.2,343.6 685.8,342.0 686.4,342.3 687.0,340.7 687.6,341.2 688.2,339.7 688.8,339.6 689.4,338.3 690.0,339.0 690.6,336.9 691.2,337.5 691.8,336.1 692.4,336.4 693.0,334.5 693.6,335.4 694.2,333.7 694.8,334.1 695.4,332.2 696.0,332.9 696.6,331.6 697.2,331.4 697.8,330.2 698.4,330.9 699.0,329.4 699.6,329.7 700.2,327.8 700.8,328.2 701.4,327.3 702.0,327.5 702.6,325.7 703.2,326.5 703.8,324.5 704.4,325.3" fill="none" stroke="#6a0ad6" stroke-width="1.2" stroke-linejoin="round"/></svg>
<div class="a" style="left:5px;top:284px;font-size:13.1px;line-height:17px;color:#5a00c8">hm2_5i20.0.encoder.02.velocity</div>
<div class="a" style="left:5px;top:301px;font-size:13.1px;line-height:17px;color:#5a00c8">10 /div</div>
<div class="a" style="left:5px;top:370px;font-size:13.1px;line-height:17px;color:#cc0000">pid-command</div>
<div class="a" style="left:5px;top:387px;font-size:13.1px;line-height:17px;color:#cc0000">5 /div</div>
<div class="a" style="left:5px;top:402px;font-size:13.1px;line-height:17px;color:#10c4c4">z-axis-feedback</div>
<div class="a" style="left:5px;top:419px;font-size:13.1px;line-height:17px;color:#10c4c4">5 /div</div>
<div class="a" style="left:5px;top:434px;font-size:13.1px;line-height:17px;color:#e4ffc4">pid.0.error</div>
<div class="a" style="left:5px;top:451px;font-size:13.1px;line-height:17px;color:#e4ffc4">5m/div</div>
<svg class="a" style="left:629.6px;top:320.4px" width="11.2" height="17.6" viewBox="0 0 14 22"><path d="M1 1 V17 L4.8 13.4 L7.6 20 L10 19 L7.2 12.6 H12.4 Z" fill="#fff" stroke="#000" stroke-width="1"/></svg>
<div class="btn" style="left:1px;top:657px;width:45px;height:27px;background:linear-gradient(#da0000,#c00000);border-color:rgba(0,0,0,.35);box-shadow:inset 0 1px 0 rgba(255,255,255,.25)"><span style="font-size:13.33px;line-height:18px;display:block;margin-top:5px">1</span></div>
<div class="btn" style="left:48px;top:657px;width:45px;height:27px;background:linear-gradient(#00dcdc,#00c0c0);border-color:rgba(0,0,0,.35);box-shadow:inset 0 1px 0 rgba(255,255,255,.25)"><span style="font-size:13.33px;line-height:18px;display:block;margin-top:5px">2</span></div>
<div class="btn" style="left:95px;top:657px;width:45px;height:27px;background:linear-gradient(#6edb00,#5fbe00);border-color:rgba(0,0,0,.35);box-shadow:inset 0 1px 0 rgba(255,255,255,.25)"><span style="font-size:13.33px;line-height:18px;display:block;margin-top:5px">3</span></div>
<div class="btn" style="left:142px;top:657px;width:45px;height:27px;background:linear-gradient(#6e00dc,#5f00be);border-color:rgba(0,0,0,.35);box-shadow:inset 0 1px 0 rgba(255,255,255,.25)"><span style="font-size:13.33px;line-height:18px;display:block;margin-top:5px">4</span></div>
<div class="btn" style="left:189px;top:657px;width:45px;height:27px;"><span style="font-size:13.33px;line-height:18px;display:block;margin-top:5px">5</span></div>
<div class="btn" style="left:236px;top:657px;width:45px;height:27px;"><span style="font-size:13.33px;line-height:18px;display:block;margin-top:5px">6</span></div>
<div class="btn" style="left:283px;top:657px;width:45px;height:27px;"><span style="font-size:13.33px;line-height:18px;display:block;margin-top:5px">7</span></div>
<div class="btn" style="left:330px;top:657px;width:45px;height:27px;"><span style="font-size:13.33px;line-height:18px;display:block;margin-top:5px">8</span></div>
<div class="btn" style="left:377px;top:657px;width:45px;height:27px;"><span style="font-size:13.33px;line-height:18px;display:block;margin-top:5px">9</span></div>
<div class="btn" style="left:424px;top:657px;width:45px;height:27px;"><span style="font-size:13.33px;line-height:18px;display:block;margin-top:5px">10</span></div>
<div class="btn" style="left:471px;top:657px;width:45px;height:27px;"><span style="font-size:13.33px;line-height:18px;display:block;margin-top:5px">11</span></div>
<div class="btn" style="left:518px;top:657px;width:45px;height:27px;"><span style="font-size:13.33px;line-height:18px;display:block;margin-top:5px">12</span></div>
<div class="btn" style="left:565px;top:657px;width:45px;height:27px;"><span style="font-size:13.33px;line-height:18px;display:block;margin-top:5px">13</span></div>
<div class="btn" style="left:612px;top:657px;width:45px;height:27px;"><span style="font-size:13.33px;line-height:18px;display:block;margin-top:5px">14</span></div>
<div class="btn" style="left:659px;top:657px;width:45px;height:27px;"><span style="font-size:13.33px;line-height:18px;display:block;margin-top:5px">15</span></div>
<div class="btn" style="left:706px;top:657px;width:55px;height:27px;"><span style="font-size:13.33px;line-height:18px;display:block;margin-top:5px">16</span></div>
<div class="fr" style="left:1px;top:695px;width:760px;height:38px"></div>
<div class="lbl" style="left:3px;top:685px;font-size:13.33px;line-height:18px">Выбранный канал</div>
<div class="a c" style="left:6px;top:708px;width:22px;font-size:13.33px;line-height:18px;">3</div>
<div class="a" style="left:31px;top:699px;width:1px;height:30px;background:#d0cdc9"></div>
<div class="btn" style="left:40px;top:704px;width:224px;height:26px;"><span style="font-size:13.33px;line-height:18px;display:block;margin-top:3px">pid.0.error</span></div>
<div class="a" style="left:268px;top:702px;font-family:'DejaVu Sans Mono','Liberation Mono',monospace;font-size:13.33px;line-height:17px;white-space:pre">f( 1,52183) =  0,00855</div>
<div class="fr" style="left:763px;top:88px;width:136px;height:96px"></div>
<div class="lbl" style="left:765px;top:78px;font-size:13.33px;line-height:18px">Режим работы</div>
<div class="rad on" style="left:766.5px;top:99.5px"></div>
<div class="a" style="left:786px;top:97px;font-size:13.33px;line-height:18px;">Нормальный</div>
<div class="rad" style="left:766.5px;top:121.5px"></div>
<div class="a" style="left:786px;top:119px;font-size:13.33px;line-height:18px;">Одиночный</div>
<div class="rad" style="left:766.5px;top:143.5px"></div>
<div class="a" style="left:786px;top:141px;font-size:13.33px;line-height:18px;">Прокрутить</div>
<div class="rad" style="left:766.5px;top:165.5px"></div>
<div class="a" style="left:786px;top:163px;font-size:13.33px;line-height:18px;">Стоп</div>
<div class="fr" style="left:763px;top:195px;width:136px;height:537px"></div>
<div class="lbl" style="left:765px;top:185px;font-size:13.33px;line-height:18px">Вертикальный</div>
<div class="a" style="left:764px;top:202px;font-size:13.33px;line-height:18px;">Усиление</div>
<div class="a" style="left:853px;top:202px;font-size:13.33px;line-height:18px;">Pos</div>
<div class="tro" style="left:795px;top:222px;width:5px;height:388px"></div>
<div class="fil" style="left:795px;top:222px;width:5px;height:152px"></div>
<div class="knb" style="left:791px;top:370px;width:13px;height:21px"></div>
<div class="a" style="left:795px;top:377px;width:5px;height:7px;background:repeating-linear-gradient(#777 0 1px,transparent 1px 3px)"></div>
<div class="tro" style="left:862px;top:222px;width:5px;height:388px"></div>
<div class="fil" style="left:862px;top:222px;width:5px;height:181px"></div>
<div class="knb" style="left:858px;top:399px;width:13px;height:21px"></div>
<div class="a" style="left:862px;top:406px;width:5px;height:7px;background:repeating-linear-gradient(#777 0 1px,transparent 1px 3px)"></div>
<div class="a" style="left:765px;top:617px;width:132px;height:1px;background:#cfccc8"></div>
<div class="a c" style="left:765px;top:622px;width:132px;font-size:13.33px;line-height:18px;">Масштаб</div>
<div class="a c" style="left:765px;top:639px;width:132px;font-size:13.33px;line-height:18px;">5m/div</div>
<div class="btn" style="left:765px;top:657px;width:132px;height:44px;"><span style="font-size:13.33px;line-height:18px;display:block;"></span></div>
<div class="a" style="left:806px;top:662px;font-size:13.33px;line-height:18px;">Отступ</div>
<div class="a" style="left:806px;top:679px;font-size:13.33px;line-height:18px;">0.000</div>
<div class="btn" style="left:765px;top:703px;width:132px;height:27px;"><span style="font-size:13.33px;line-height:18px;display:block;margin-top:4px">Chan Off</span></div>
<div class="fr" style="left:931px;top:88px;width:75px;height:644px"></div>
<div class="lbl" style="left:934px;top:78px;font-size:13.33px;line-height:18px">Запуск</div>
<div class="rad" style="left:935.5px;top:99.5px"></div>
<div class="a" style="left:955px;top:97px;font-size:13.33px;line-height:18px;">Normal</div>
<div class="rad on" style="left:935.5px;top:121.5px"></div>
<div class="a" style="left:955px;top:119px;font-size:13.33px;line-height:18px;">Авто</div>
<div class="btn" style="left:934px;top:140px;width:70px;height:27px;"><span style="font-size:13.33px;line-height:18px;display:block;margin-top:4px">Force</span></div>
<div class="a" style="left:933px;top:168px;font-size:13.33px;line-height:18px;">Level</div>
<div class="a" style="left:975px;top:168px;font-size:13.33px;line-height:18px;">Pos</div>
<div class="tro" style="left:948px;top:188px;width:5px;height:422px"></div>
<div class="fil" style="left:948px;top:188px;width:5px;height:205px"></div>
<div class="knb" style="left:944px;top:389px;width:13px;height:21px"></div>
<div class="a" style="left:948px;top:396px;width:5px;height:7px;background:repeating-linear-gradient(#777 0 1px,transparent 1px 3px)"></div>
<div class="tro" style="left:984px;top:188px;width:5px;height:422px"></div>
<div class="fil" style="left:984px;top:188px;width:5px;height:205px"></div>
<div class="knb" style="left:980px;top:389px;width:13px;height:21px"></div>
<div class="a" style="left:984px;top:396px;width:5px;height:7px;background:repeating-linear-gradient(#777 0 1px,transparent 1px 3px)"></div>
<div class="a" style="left:933px;top:617px;width:71px;height:1px;background:#cfccc8"></div>
<div class="a c" style="left:933px;top:622px;width:71px;font-size:13.33px;line-height:18px;">Level</div>
<div class="a c" style="left:933px;top:639px;width:71px;font-size:13.33px;line-height:18px;">----</div>
<div class="btn" style="left:934px;top:657px;width:70px;height:27px;"><span style="font-size:13.33px;line-height:18px;display:block;margin-top:4px">Rising</span></div>
<div class="btn" style="left:934px;top:686px;width:70px;height:44px;"><span style="font-size:13.33px;line-height:18px;display:block;"></span></div>
<div class="a" style="left:947px;top:691px;font-size:13.33px;line-height:18px;">Source</div>
<div class="a" style="left:947px;top:708px;font-size:13.33px;line-height:18px;">None</div>
<div class="a" style="left:1360px;top:25px;width:6px;height:8px;background:#3a1028"></div>
<div class="a" style="left:1047px;top:25px;width:318px;height:588px;background:#ebeae9;border:1px solid #c4c1bd;border-top:0;border-radius:6px 6px 0 0;box-shadow:0 2px 6px rgba(0,0,0,.4)"></div>
<div class="a" style="left:1051px;top:49px;width:311px;height:560px;background:#d9d9d9"></div>
<div class="a" style="left:1365px;top:40px;width:1px;height:573px;background:#b9b6b2"></div>
<div class="a" style="left:1048px;top:25px;width:317px;height:24px;border-radius:6px 6px 0 0;background:linear-gradient(90deg,#d6c4cd,#e2d9dc 30%,#e6e1e2 60%,#ddd5d8);border:1px solid #8f8287;border-top-color:#6e6065;border-bottom:1px solid #a39d9c"></div>
<div class="a" style="left:1049px;top:26px;width:315px;height:22px;border-radius:5px 5px 0 0;background:linear-gradient(rgba(255,255,255,.3),rgba(255,255,255,0) 45%,rgba(0,0,0,.05))"></div>
<div class="a" style="left:1055px;top:31px;width:14px;height:12px;border:1px solid #6b6f7a;background:#e4e3e0;border-top:3px solid #3c5d9c"></div>
<div class="a c" style="left:1134px;top:29px;width:100px;font-weight:bold;font-size:13.33px;line-height:18px;color:#7c7477">gui0</div>
<div class="wb" style="left:1298px;border:1px solid #7d7376;background:linear-gradient(#f1eaed,#e0d8db);box-shadow:inset 0 0 0 1px rgba(255,255,255,.45)"></div>
<svg class="a" style="left:1298px;top:28px" width="18" height="18" viewBox="0 0 18 18"><rect x="4.5" y="10.7" width="9" height="2.6" fill="#555051"/></svg>
<div class="wb" style="left:1320px;border:1px solid #7d7376;background:linear-gradient(#f1eaed,#e0d8db);box-shadow:inset 0 0 0 1px rgba(255,255,255,.45)"></div>
<svg class="a" style="left:1320px;top:28px" width="18" height="18" viewBox="0 0 18 18"><rect x="5.1" y="5" width="7.8" height="7.8" fill="none" stroke="#555051" stroke-width="1.1"/><rect x="4.6" y="4.5" width="8.8" height="2.2" fill="#555051"/></svg>
<div class="wb" style="left:1342px;border:1px solid #7d7376;background:linear-gradient(#f1eaed,#e0d8db);box-shadow:inset 0 0 0 1px rgba(255,255,255,.45)"></div>
<svg class="a" style="left:1342px;top:28px" width="18" height="18" viewBox="0 0 18 18"><path d="M5.6 5.4 L12.4 12.2 M12.4 5.4 L5.6 12.2" stroke="#555051" stroke-width="2.3" stroke-linecap="round"/></svg>
<div class="a" style="left:1052px;top:50px;width:310px;height:28px;background:#d9d9d9;border:1px solid;border-color:#fff #828282 #828282 #fff"></div>
<div class="a c" style="left:1052px;top:56px;width:310px;font-size:11.8px;line-height:16px;color:#000">Enable</div>
<div class="a" style="left:1053px;top:89px;font-size:11.8px;line-height:16px;color:#000">Axis Selection</div>
<div class="a" style="left:1148px;top:89px;font-size:11.8px;line-height:16px;color:#000">Waveform</div>
<div class="a" style="left:1239px;top:80px;font-size:11.8px;line-height:16px;color:#000">Period</div>
<div class="a" style="left:1298px;top:80px;font-size:11.8px;line-height:16px;color:#000">Amplitude</div>
<div class="a" style="left:1051px;top:125px;width:86px;height:66px;border:1px solid #828282;box-shadow:inset 1px 1px 0 #fff,1px 1px 0 #fff"></div>
<div class="a" style="left:1139px;top:125px;width:79px;height:66px;border:1px solid #828282;box-shadow:inset 1px 1px 0 #fff,1px 1px 0 #fff"></div>
<div class="a" style="left:1085.5px;top:130.5px;width:11px;height:11px;border-radius:50%;background:#fff;border:1px solid;border-color:#828282 #eee #eee #828282"></div>
<div class="a" style="left:1101px;top:129px;font-size:11.8px;line-height:16px;color:#000">X</div>
<div class="a" style="left:1085.5px;top:151.5px;width:11px;height:11px;border-radius:50%;background:#fff;border:1px solid;border-color:#828282 #eee #eee #828282"></div>
<div class="a" style="left:1101px;top:150px;font-size:11.8px;line-height:16px;color:#000">Y</div>
<div class="a" style="left:1085.5px;top:172.5px;width:11px;height:11px;border-radius:50%;background:#fff;border:1px solid;border-color:#828282 #eee #eee #828282"></div>
<div class="a" style="left:1089px;top:176px;width:4px;height:4px;border-radius:50%;background:#000"></div>
<div class="a" style="left:1101px;top:171px;font-size:11.8px;line-height:16px;color:#000">Z</div>
<div class="a" style="left:1151.5px;top:130.5px;width:11px;height:11px;border-radius:50%;background:#fff;border:1px solid;border-color:#828282 #eee #eee #828282"></div>
<div class="a" style="left:1168px;top:129px;font-size:11.8px;line-height:16px;color:#000">Square</div>
<div class="a" style="left:1149.5px;top:151.5px;width:11px;height:11px;border-radius:50%;background:#fff;border:1px solid;border-color:#828282 #eee #eee #828282"></div>
<div class="a" style="left:1166px;top:150px;font-size:11.8px;line-height:16px;color:#000">Triangle</div>
<div class="a" style="left:1160.5px;top:172.5px;width:11px;height:11px;border-radius:50%;background:#fff;border:1px solid;border-color:#828282 #eee #eee #828282"></div>
<div class="a" style="left:1164px;top:176px;width:4px;height:4px;border-radius:50%;background:#000"></div>
<div class="a" style="left:1177px;top:171px;font-size:11.8px;line-height:16px;color:#000">Sine</div>
<div class="a" style="left:1267px;top:99px;width:27px;height:100px;background:#b3b3b3;border:1px solid;border-color:#828282 #fff #fff #828282"></div>
<div class="a" style="left:1268px;top:153px;width:25px;height:30px;background:#d9d9d9;border:2px solid;border-color:#fff #828282 #828282 #fff"></div>
<div class="a" style="left:1270px;top:167px;width:21px;height:2px;background:#828282;border-bottom:1px solid #fff"></div>
<div class="a" style="left:1326px;top:99px;width:27px;height:100px;background:#b3b3b3;border:1px solid;border-color:#828282 #fff #fff #828282"></div>
<div class="a" style="left:1327px;top:100px;width:25px;height:30px;background:#d9d9d9;border:2px solid;border-color:#fff #828282 #828282 #fff"></div>
<div class="a" style="left:1329px;top:114px;width:21px;height:2px;background:#828282;border-bottom:1px solid #fff"></div>
<div class="a hv" style="left:1235.3px;top:157px;font-size:21.5px;line-height:26px;color:#000">4.5</div>
<div class="a hv" style="left:1300px;top:104px;font-size:21.5px;line-height:26px;color:#000">20</div>
<svg class="a" style="left:1051px;top:201px" width="100" height="100" viewBox="-50.3 -50.3 100 100"><path d="M-33.9 33.9 A48 48 0 0 1 33.9 -33.9" fill="none" stroke="#fff" stroke-width="1.2"/><circle r="45.6" fill="#00ff00" stroke="#000" stroke-width="2.8"/><path d="M12.1 -37.1L13.8 -42.3M22.9 -31.6L26.2 -36.0M31.6 -22.9L36.0 -26.2M37.1 -12.1L42.3 -13.8M37.1 12.1L42.3 13.8M31.6 22.9L36.0 26.2M22.9 31.6L26.2 36.0M12.1 37.1L13.8 42.3M-12.1 37.1L-13.8 42.3M-22.9 31.6L-26.2 36.0M-31.6 22.9L-36.0 26.2M-37.1 12.1L-42.3 13.8M-37.1 -12.1L-42.3 -13.8M-31.6 -22.9L-36.0 -26.2M-22.9 -31.6L-26.2 -36.0M-12.1 -37.1L-13.8 -42.3" stroke="#000" stroke-width="2.2"/><path d="M0.0 -39.0L0.0 -44.5M39.0 0.0L44.5 0.0M0.0 39.0L0.0 44.5M-39.0 0.0L-44.5 0.0" stroke="#000" stroke-width="1"/><circle r="39.3" fill="#ffff00" stroke="#000" stroke-width="1.4"/><g transform="rotate(180)"><path d="M44.8 0 L33.6 -13.4 L34.6 -3.5 L30 -3.5 L30 3.5 L34.6 3.5 L33.6 13.4 Z" fill="#000"/><circle cx="32.6" cy="0" r="4.5" fill="#000"/></g><text x="0" y="-11.1" text-anchor="middle" font-family="Liberation Sans,sans-serif" font-size="16" fill="#141400">P</text><text x="0" y="5.1" text-anchor="middle" font-family="Liberation Sans,sans-serif" font-size="16" fill="#141400">10.0</text><text x="0" y="21.3" text-anchor="middle" font-family="Liberation Sans,sans-serif" font-size="16" fill="#141400">x 1.0</text></svg>
<svg class="a" style="left:1153px;top:201px" width="100" height="100" viewBox="-50.3 -50.3 100 100"><path d="M-33.9 33.9 A48 48 0 0 1 33.9 -33.9" fill="none" stroke="#fff" stroke-width="1.2"/><circle r="45.6" fill="#00ff00" stroke="#000" stroke-width="2.8"/><path d="M12.1 -37.1L13.8 -42.3M22.9 -31.6L26.2 -36.0M31.6 -22.9L36.0 -26.2M37.1 -12.1L42.3 -13.8M37.1 12.1L42.3 13.8M31.6 22.9L36.0 26.2M22.9 31.6L26.2 36.0M12.1 37.1L13.8 42.3M-12.1 37.1L-13.8 42.3M-22.9 31.6L-26.2 36.0M-31.6 22.9L-36.0 26.2M-37.1 12.1L-42.3 13.8M-37.1 -12.1L-42.3 -13.8M-31.6 -22.9L-36.0 -26.2M-22.9 -31.6L-26.2 -36.0M-12.1 -37.1L-13.8 -42.3" stroke="#000" stroke-width="2.2"/><path d="M0.0 -39.0L0.0 -44.5M39.0 0.0L44.5 0.0M0.0 39.0L0.0 44.5M-39.0 0.0L-44.5 0.0" stroke="#000" stroke-width="1"/><circle r="39.3" fill="#ffff00" stroke="#000" stroke-width="1.4"/><g transform="rotate(0)"><path d="M44.8 0 L33.6 -13.4 L34.6 -3.5 L30 -3.5 L30 3.5 L34.6 3.5 L33.6 13.4 Z" fill="#000"/><circle cx="32.6" cy="0" r="4.5" fill="#000"/></g><text x="0" y="-11.1" text-anchor="middle" font-family="Liberation Sans,sans-serif" font-size="16" fill="#141400">Pos FF</text><text x="0" y="5.1" text-anchor="middle" font-family="Liberation Sans,sans-serif" font-size="16" fill="#141400">0.0</text><text x="0" y="21.3" text-anchor="middle" font-family="Liberation Sans,sans-serif" font-size="16" fill="#141400">x 0.001</text></svg>
<svg class="a" style="left:1051px;top:303px" width="100" height="100" viewBox="-50.3 -50.3 100 100"><path d="M-33.9 33.9 A48 48 0 0 1 33.9 -33.9" fill="none" stroke="#fff" stroke-width="1.2"/><circle r="45.6" fill="#00ff00" stroke="#000" stroke-width="2.8"/><path d="M12.1 -37.1L13.8 -42.3M22.9 -31.6L26.2 -36.0M31.6 -22.9L36.0 -26.2M37.1 -12.1L42.3 -13.8M37.1 12.1L42.3 13.8M31.6 22.9L36.0 26.2M22.9 31.6L26.2 36.0M12.1 37.1L13.8 42.3M-12.1 37.1L-13.8 42.3M-22.9 31.6L-26.2 36.0M-31.6 22.9L-36.0 26.2M-37.1 12.1L-42.3 13.8M-37.1 -12.1L-42.3 -13.8M-31.6 -22.9L-36.0 -26.2M-22.9 -31.6L-26.2 -36.0M-12.1 -37.1L-13.8 -42.3" stroke="#000" stroke-width="2.2"/><path d="M0.0 -39.0L0.0 -44.5M39.0 0.0L44.5 0.0M0.0 39.0L0.0 44.5M-39.0 0.0L-44.5 0.0" stroke="#000" stroke-width="1"/><circle r="39.3" fill="#ffff00" stroke="#000" stroke-width="1.4"/><g transform="rotate(110)"><path d="M44.8 0 L33.6 -13.4 L34.6 -3.5 L30 -3.5 L30 3.5 L34.6 3.5 L33.6 13.4 Z" fill="#000"/><circle cx="32.6" cy="0" r="4.5" fill="#000"/></g><text x="0" y="-11.1" text-anchor="middle" font-family="Liberation Sans,sans-serif" font-size="16" fill="#141400">I</text><text x="0" y="5.1" text-anchor="middle" font-family="Liberation Sans,sans-serif" font-size="16" fill="#141400">600.0</text><text x="0" y="21.3" text-anchor="middle" font-family="Liberation Sans,sans-serif" font-size="16" fill="#141400">x 100.0</text></svg>
<svg class="a" style="left:1153px;top:303px" width="100" height="100" viewBox="-50.3 -50.3 100 100"><path d="M-33.9 33.9 A48 48 0 0 1 33.9 -33.9" fill="none" stroke="#fff" stroke-width="1.2"/><circle r="45.6" fill="#00ff00" stroke="#000" stroke-width="2.8"/><path d="M12.1 -37.1L13.8 -42.3M22.9 -31.6L26.2 -36.0M31.6 -22.9L36.0 -26.2M37.1 -12.1L42.3 -13.8M37.1 12.1L42.3 13.8M31.6 22.9L36.0 26.2M22.9 31.6L26.2 36.0M12.1 37.1L13.8 42.3M-12.1 37.1L-13.8 42.3M-22.9 31.6L-26.2 36.0M-31.6 22.9L-36.0 26.2M-37.1 12.1L-42.3 13.8M-37.1 -12.1L-42.3 -13.8M-31.6 -22.9L-36.0 -26.2M-22.9 -31.6L-26.2 -36.0M-12.1 -37.1L-13.8 -42.3" stroke="#000" stroke-width="2.2"/><path d="M0.0 -39.0L0.0 -44.5M39.0 0.0L44.5 0.0M0.0 39.0L0.0 44.5M-39.0 0.0L-44.5 0.0" stroke="#000" stroke-width="1"/><circle r="39.3" fill="#ffff00" stroke="#000" stroke-width="1.4"/><g transform="rotate(66)"><path d="M44.8 0 L33.6 -13.4 L34.6 -3.5 L30 -3.5 L30 3.5 L34.6 3.5 L33.6 13.4 Z" fill="#000"/><circle cx="32.6" cy="0" r="4.5" fill="#000"/></g><text x="0" y="-11.1" text-anchor="middle" font-family="Liberation Sans,sans-serif" font-size="16" fill="#141400">Vel FF</text><text x="0" y="5.1" text-anchor="middle" font-family="Liberation Sans,sans-serif" font-size="16" fill="#141400">0.004</text><text x="0" y="21.3" text-anchor="middle" font-family="Liberation Sans,sans-serif" font-size="16" fill="#141400">x 0.001</text></svg>
<svg class="a" style="left:1051px;top:405px" width="100" height="100" viewBox="-50.3 -50.3 100 100"><path d="M-33.9 33.9 A48 48 0 0 1 33.9 -33.9" fill="none" stroke="#fff" stroke-width="1.2"/><circle r="45.6" fill="#00ff00" stroke="#000" stroke-width="2.8"/><path d="M12.1 -37.1L13.8 -42.3M22.9 -31.6L26.2 -36.0M31.6 -22.9L36.0 -26.2M37.1 -12.1L42.3 -13.8M37.1 12.1L42.3 13.8M31.6 22.9L36.0 26.2M22.9 31.6L26.2 36.0M12.1 37.1L13.8 42.3M-12.1 37.1L-13.8 42.3M-22.9 31.6L-26.2 36.0M-31.6 22.9L-36.0 26.2M-37.1 12.1L-42.3 13.8M-37.1 -12.1L-42.3 -13.8M-31.6 -22.9L-36.0 -26.2M-22.9 -31.6L-26.2 -36.0M-12.1 -37.1L-13.8 -42.3" stroke="#000" stroke-width="2.2"/><path d="M0.0 -39.0L0.0 -44.5M39.0 0.0L44.5 0.0M0.0 39.0L0.0 44.5M-39.0 0.0L-44.5 0.0" stroke="#000" stroke-width="1"/><circle r="39.3" fill="#ffff00" stroke="#000" stroke-width="1.4"/><g transform="rotate(33)"><path d="M44.8 0 L33.6 -13.4 L34.6 -3.5 L30 -3.5 L30 3.5 L34.6 3.5 L33.6 13.4 Z" fill="#000"/><circle cx="32.6" cy="0" r="4.5" fill="#000"/></g><text x="0" y="-11.1" text-anchor="middle" font-family="Liberation Sans,sans-serif" font-size="16" fill="#141400">D</text><text x="0" y="5.1" text-anchor="middle" font-family="Liberation Sans,sans-serif" font-size="16" fill="#141400">0.002</text><text x="0" y="21.3" text-anchor="middle" font-family="Liberation Sans,sans-serif" font-size="16" fill="#141400">x 0.001</text></svg>
<svg class="a" style="left:1153px;top:405px" width="100" height="100" viewBox="-50.3 -50.3 100 100"><path d="M-33.9 33.9 A48 48 0 0 1 33.9 -33.9" fill="none" stroke="#fff" stroke-width="1.2"/><circle r="45.6" fill="#00ff00" stroke="#000" stroke-width="2.8"/><path d="M12.1 -37.1L13.8 -42.3M22.9 -31.6L26.2 -36.0M31.6 -22.9L36.0 -26.2M37.1 -12.1L42.3 -13.8M37.1 12.1L42.3 13.8M31.6 22.9L36.0 26.2M22.9 31.6L26.2 36.0M12.1 37.1L13.8 42.3M-12.1 37.1L-13.8 42.3M-22.9 31.6L-26.2 36.0M-31.6 22.9L-36.0 26.2M-37.1 12.1L-42.3 13.8M-37.1 -12.1L-42.3 -13.8M-31.6 -22.9L-36.0 -26.2M-22.9 -31.6L-26.2 -36.0M-12.1 -37.1L-13.8 -42.3" stroke="#000" stroke-width="2.2"/><path d="M0.0 -39.0L0.0 -44.5M39.0 0.0L44.5 0.0M0.0 39.0L0.0 44.5M-39.0 0.0L-44.5 0.0" stroke="#000" stroke-width="1"/><circle r="39.3" fill="#ffff00" stroke="#000" stroke-width="1.4"/><g transform="rotate(35)"><path d="M44.8 0 L33.6 -13.4 L34.6 -3.5 L30 -3.5 L30 3.5 L34.6 3.5 L33.6 13.4 Z" fill="#000"/><circle cx="32.6" cy="0" r="4.5" fill="#000"/></g><text x="0" y="-11.1" text-anchor="middle" font-family="Liberation Sans,sans-serif" font-size="16" fill="#141400">Accel FF</text><text x="0" y="5.1" text-anchor="middle" font-family="Liberation Sans,sans-serif" font-size="16" fill="#141400">0.002</text><text x="0" y="21.3" text-anchor="middle" font-family="Liberation Sans,sans-serif" font-size="16" fill="#141400">x 0.001</text></svg>
<svg class="a" style="left:1051px;top:507px" width="100" height="100" viewBox="-50.3 -50.3 100 100"><path d="M-33.9 33.9 A48 48 0 0 1 33.9 -33.9" fill="none" stroke="#fff" stroke-width="1.2"/><circle r="45.6" fill="#00ff00" stroke="#000" stroke-width="2.8"/><path d="M12.1 -37.1L13.8 -42.3M22.9 -31.6L26.2 -36.0M31.6 -22.9L36.0 -26.2M37.1 -12.1L42.3 -13.8M37.1 12.1L42.3 13.8M31.6 22.9L36.0 26.2M22.9 31.6L26.2 36.0M12.1 37.1L13.8 42.3M-12.1 37.1L-13.8 42.3M-22.9 31.6L-26.2 36.0M-31.6 22.9L-36.0 26.2M-37.1 12.1L-42.3 13.8M-37.1 -12.1L-42.3 -13.8M-31.6 -22.9L-36.0 -26.2M-22.9 -31.6L-26.2 -36.0M-12.1 -37.1L-13.8 -42.3" stroke="#000" stroke-width="2.2"/><path d="M0.0 -39.0L0.0 -44.5M39.0 0.0L44.5 0.0M0.0 39.0L0.0 44.5M-39.0 0.0L-44.5 0.0" stroke="#000" stroke-width="1"/><circle r="39.3" fill="#ffff00" stroke="#000" stroke-width="1.4"/><g transform="rotate(0)"><path d="M44.8 0 L33.6 -13.4 L34.6 -3.5 L30 -3.5 L30 3.5 L34.6 3.5 L33.6 13.4 Z" fill="#000"/><circle cx="32.6" cy="0" r="4.5" fill="#000"/></g><text x="0" y="-11.1" text-anchor="middle" font-family="Liberation Sans,sans-serif" font-size="16" fill="#141400">Bias</text><text x="0" y="5.1" text-anchor="middle" font-family="Liberation Sans,sans-serif" font-size="16" fill="#141400">0.0</text><text x="0" y="21.3" text-anchor="middle" font-family="Liberation Sans,sans-serif" font-size="16" fill="#141400">x 0.001</text></svg>
<svg class="a" style="left:1153px;top:507px" width="100" height="100" viewBox="-50.3 -50.3 100 100"><path d="M-33.9 33.9 A48 48 0 0 1 33.9 -33.9" fill="none" stroke="#fff" stroke-width="1.2"/><circle r="45.6" fill="#00ff00" stroke="#000" stroke-width="2.8"/><path d="M12.1 -37.1L13.8 -42.3M22.9 -31.6L26.2 -36.0M31.6 -22.9L36.0 -26.2M37.1 -12.1L42.3 -13.8M37.1 12.1L42.3 13.8M31.6 22.9L36.0 26.2M22.9 31.6L26.2 36.0M12.1 37.1L13.8 42.3M-12.1 37.1L-13.8 42.3M-22.9 31.6L-26.2 36.0M-31.6 22.9L-36.0 26.2M-37.1 12.1L-42.3 13.8M-37.1 -12.1L-42.3 -13.8M-31.6 -22.9L-36.0 -26.2M-22.9 -31.6L-26.2 -36.0M-12.1 -37.1L-13.8 -42.3" stroke="#000" stroke-width="2.2"/><path d="M0.0 -39.0L0.0 -44.5M39.0 0.0L44.5 0.0M0.0 39.0L0.0 44.5M-39.0 0.0L-44.5 0.0" stroke="#000" stroke-width="1"/><circle r="39.3" fill="#ffff00" stroke="#000" stroke-width="1.4"/><g transform="rotate(35)"><path d="M44.8 0 L33.6 -13.4 L34.6 -3.5 L30 -3.5 L30 3.5 L34.6 3.5 L33.6 13.4 Z" fill="#000"/><circle cx="32.6" cy="0" r="4.5" fill="#000"/></g><text x="0" y="-11.1" text-anchor="middle" font-family="Liberation Sans,sans-serif" font-size="16" fill="#141400">Deadband</text><text x="0" y="5.1" text-anchor="middle" font-family="Liberation Sans,sans-serif" font-size="16" fill="#141400">0.002</text><text x="0" y="21.3" text-anchor="middle" font-family="Liberation Sans,sans-serif" font-size="16" fill="#141400">x 0.001</text></svg>
<div class="a" style="left:1042px;top:27px;width:8px;height:710px;background:linear-gradient(90deg,rgba(0,0,0,.36),rgba(0,0,0,.12) 50%,rgba(0,0,0,0))"></div>
<div class="a" style="left:0;top:743px;width:1366px;height:25px;background:linear-gradient(#e3e1de,#edeceb 20%,#edeceb);border-top:1px solid #fbfbfa"></div>
<div class="a" style="left:2px;top:745px;width:21px;height:22px;border:1px solid #a29f9a;border-radius:4px;background:linear-gradient(#fbfbfa,#e7e5e2)"></div>
<div class="a" style="left:5px;top:749px;width:15px;height:14px;border:1px solid #5a2d6e;border-top:4px solid #dcc4e6;background:linear-gradient(#a44fc4,#8a35ac);outline:1px solid #6a3a80;outline-offset:-1px"></div>
<div class="a" style="left:7px;top:753px;width:3px;height:2px;background:#fff"></div>
<div class="a" style="left:28px;top:748px;width:3px;height:17px;background:repeating-linear-gradient(#b5b2ad 0 1px,transparent 1px 3px)"></div>
<div class="tb" style="left:35px;width:226px;"><svg style="position:absolute;left:6px;top:2px" width="18" height="17" viewBox="0 0 18 17"><path d="M1.5 2.5 H7 L8.5 4 H15.5 V15 H1.5 Z" fill="#f2efec" stroke="#9a968f" stroke-width="1"/><rect x="3" y="5.5" width="11" height="9" fill="#e0582a"/><path d="M9 7 V15 L11 13.2 L12.4 16 L13.6 15.4 L12.3 12.8 H14.6 Z" fill="#fff" stroke="#444" stroke-width=".7"/></svg><span><i style="font-style:normal;letter-spacing:-.27px">pid_tuning-865580c9afe8b...</i></span></div>
<div class="tb" style="left:263px;width:226px;"><svg style="position:absolute;left:6px;top:2px" width="18" height="17" viewBox="0 0 18 17"><rect x="2.5" y="1.5" width="11" height="14" fill="#fbfbfa" stroke="#8a8782" stroke-width="1"/><path d="M4.5 5H11M4.5 7.5H11M4.5 10H9" stroke="#b5b2ad" stroke-width="1"/><path d="M15.5 3 L8 11.5 L7 14 L9.6 12.8 L17 4.4 Z" fill="#444" stroke="#222" stroke-width=".6"/></svg><span><i style="font-style:normal;letter-spacing:-.12px">6720_1.ini (~/Рабочий ст...</i></span></div>
<div class="tb" style="left:491px;width:226px;"><svg style="position:absolute;left:6px;top:3px" width="17" height="15" viewBox="0 0 17 15"><rect x=".5" y=".5" width="16" height="14" rx="1.5" fill="#2b2b2b" stroke="#6d6a66"/><path d="M3.5 4.5 L6.5 7 L3.5 9.5" fill="none" stroke="#eee" stroke-width="1.3"/><path d="M7.5 10.5 H11.5" stroke="#eee" stroke-width="1.3"/></svg><span>Терминал</span></div>
<div class="tb" style="left:719px;width:226px;"><div style="position:absolute;left:6px;top:4px;width:15px;height:13px;border:1px solid #6b6f7a;background:#e4e3e0;border-top:3px solid #3c5d9c"></div><span>gui0</span></div>
<div class="tb" style="left:947px;width:227px;background:linear-gradient(#b9b6b2,#c9c6c2 30%,#d0cecb);border-color:#8e8b86;box-shadow:inset 0 1px 2px rgba(0,0,0,.2)"><div style="position:absolute;left:6px;top:4px;width:15px;height:13px;border:1px solid #6b6f7a;background:#e4e3e0;border-top:3px solid #3c5d9c"></div><span>HAL Осциллограф</span></div>
<div class="a" style="left:1195px;top:745px;width:144px;height:22px;border-radius:5px;background:#a9a5a1"></div>
<div class="a" style="left:1231px;top:746px;width:36px;height:21px;border:1px solid #eeeeec;background:#a9a5a1"></div>
<div class="a" style="left:1232px;top:747px;width:21px;height:14px;border:1px solid #f4f4f2;background:#84a6d8"></div>
<div class="a" style="left:1248px;top:752px;width:19px;height:14px;border:1px solid #f4f4f2;background:#84a6d8"></div>
<div class="a" style="left:1267px;top:746px;width:36px;height:21px;background:#cfe0f6"></div>
<div class="a" style="left:1273px;top:749px;width:14px;height:12px;border:1px solid #4f6fa5;border-top:3px solid #3c5d9c;background:#dedcd8"></div>
<div class="a" style="left:1294px;top:746px;width:8px;height:15px;border:1px solid #f4f4f2;background:#84a6d8"></div>
<div class="a" style="left:1294px;top:762px;width:8px;height:3px;background:#84a6d8"></div>
<svg class="a" style="left:1343px;top:745px" width="23" height="23" viewBox="0 0 23 23"><path d="M2.5 3.5 H18.5 L16.5 21 H4.5 Z" fill="#d9d7d4" stroke="#9a9792" stroke-width="1"/><ellipse cx="10.5" cy="3.5" rx="8.3" ry="2.2" fill="#bcb9b5" stroke="#8f8c87" stroke-width="1"/><path d="M6 8 L8 12 L6.5 16 M11 7 L12.5 11 L10.5 14 L12 18 M15 8 L14 13" stroke="#f6f6f4" stroke-width="1.6" fill="none"/></svg>
</body></html>
